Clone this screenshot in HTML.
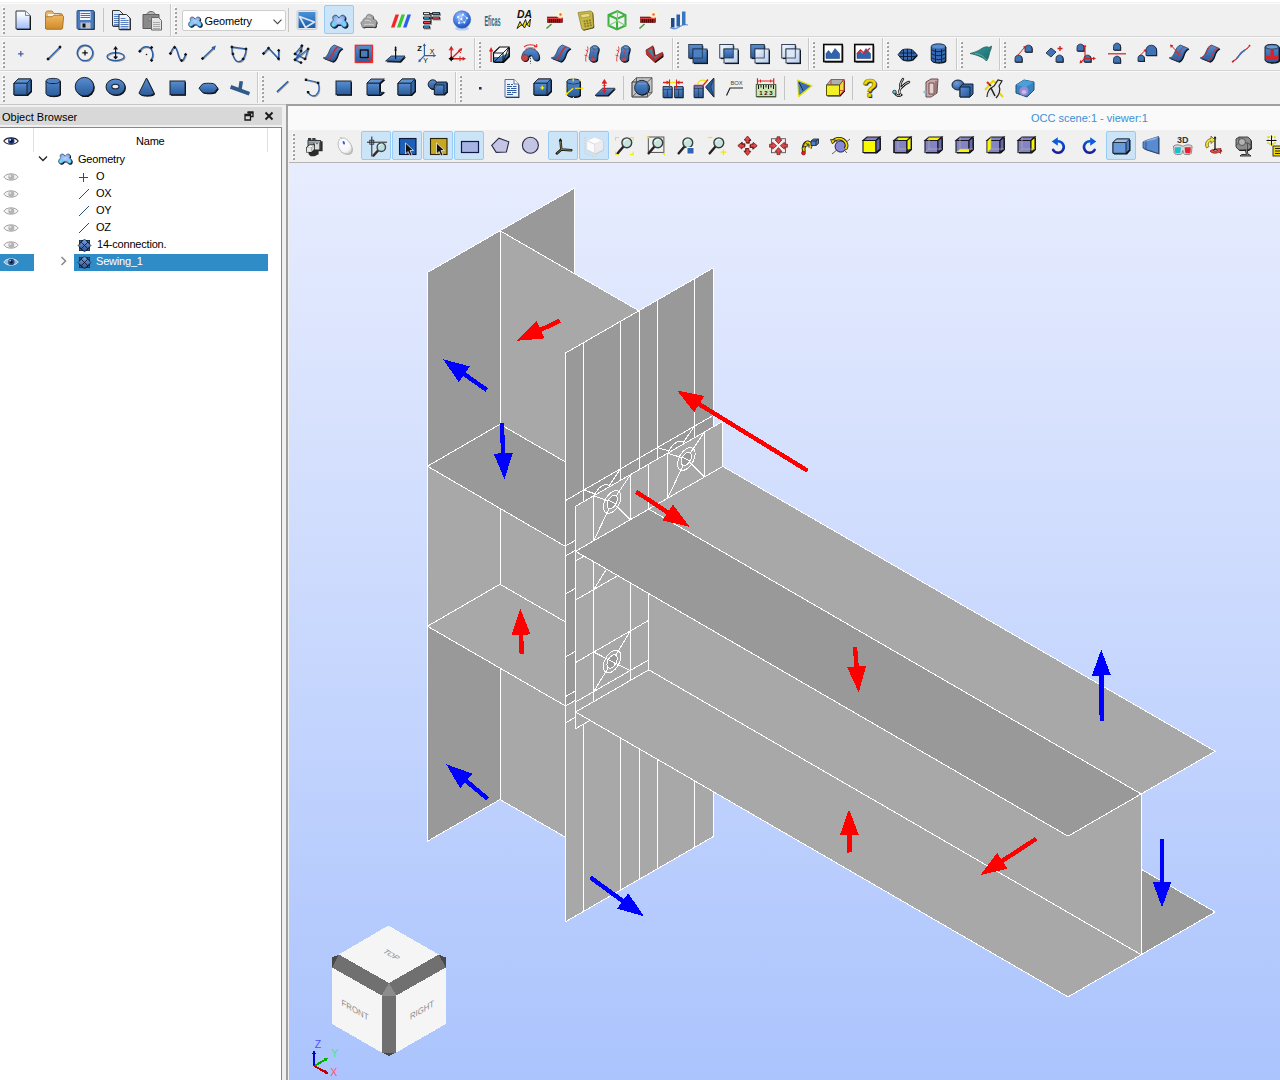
<!DOCTYPE html>
<html><head><meta charset="utf-8"><title>SALOME Geometry</title>
<style>
html,body{margin:0;padding:0}
html{overflow:hidden;width:1280px;height:1080px}
body{width:1280px;height:1080px;overflow:hidden;background:#f0f0f0;position:relative;font-family:"Liberation Sans",sans-serif;font-size:11px;color:#000}
.topw{position:absolute;left:0;top:0;width:1280px;height:2px;background:#fff}
.rowline{position:absolute;left:0;width:1280px;height:1px;background:#d4d4d4}
.ic{position:absolute;overflow:visible}
.grip{position:absolute;width:3px;background:repeating-linear-gradient(#a2a2a2 0 2px,transparent 2px 4px) 1px 1px/2px 100% no-repeat,repeating-linear-gradient(#fff 0 2px,transparent 2px 4px) 0 0/2px 100% no-repeat}
.vsep{position:absolute;width:1px;background:#c8c8c8;box-shadow:1px 0 0 #fbfbfb}
.tsep{position:absolute;width:1px;background:#c4c4c4}
.hl{position:absolute;background:#cce4f7;border:1px solid #99ccf5;box-sizing:border-box;border-radius:2px}
.combo{position:absolute;left:181.5px;top:9.5px;width:104.5px;height:21.5px;box-sizing:border-box;background:#fff;border:1px solid #cdcdcd;border-radius:2px}
.combo span{position:absolute;left:22px;top:4.5px;font-size:11px;letter-spacing:-0.100px}
.dock-title{position:absolute;left:0;top:107px;width:282px;height:18px;background:#d8d8d8}
.dock-title span{position:absolute;left:2px;top:3.5px;font-size:11px}
.tree{position:absolute;left:-1px;top:127px;width:283px;height:960px;background:#fff;border:1px solid #828790;box-sizing:border-box}
.hdrline{position:absolute;width:1px;background:#e0e0e0}
.txt{position:absolute;white-space:nowrap;font-size:11px;line-height:14px;letter-spacing:-0.200px}
.sel{position:absolute;background:#308cc6}
.vline-h{position:absolute;left:287px;top:104px;width:993px;height:2px;background:#a0a0a0}
.vline-v{position:absolute;left:286px;top:104px;width:2px;height:976px;background:#a0a0a0}
.vtitle{position:absolute;left:288px;top:106px;width:992px;height:24px;background:#fafafa}
.vtitle span{position:absolute;left:743px;top:6px;color:#3a8fd4;font-size:11px;white-space:nowrap}
.vtool{position:absolute;left:289px;top:130px;width:991px;height:32px;background:#f0f0f0;border-bottom:1px solid #b4b4b4}
.view3d{position:absolute;left:289px;top:163px}
</style></head>
<body>
<svg width="0" height="0" style="position:absolute"><defs>
<linearGradient id="gPage" x1="0" y1="0" x2="0" y2="1"><stop offset="0" stop-color="#ffffff"/><stop offset=".25" stop-color="#f0f5ff"/><stop offset="1" stop-color="#9cbcf8"/></linearGradient>
<linearGradient id="gFolder" x1="0" y1="0" x2="0" y2="1"><stop offset="0" stop-color="#f0b860"/><stop offset="1" stop-color="#d08a28"/></linearGradient>
<linearGradient id="gBlue" x1="0" y1="0" x2="1" y2="1"><stop offset="0" stop-color="#5b8fd6"/><stop offset="1" stop-color="#2a5596"/></linearGradient>
<linearGradient id="gBlueV" x1="0" y1="0" x2="0" y2="1"><stop offset="0" stop-color="#5a8ed0"/><stop offset=".5" stop-color="#3f74b6"/><stop offset="1" stop-color="#2c5a98"/></linearGradient>
<linearGradient id="gCam" x1="0" y1="0" x2="0" y2="1"><stop offset="0" stop-color="#6a6a70"/><stop offset="1" stop-color="#2a2a30"/></linearGradient>
<linearGradient id="gArrow" gradientUnits="userSpaceOnUse" x1="0" y1="6" x2="0" y2="20"><stop offset="0" stop-color="#0a5cdc"/><stop offset="1" stop-color="#1a1890"/></linearGradient>
<radialGradient id="gMouse" cx=".4" cy=".35" r=".75"><stop offset="0" stop-color="#ffffff"/><stop offset=".7" stop-color="#f4f4f4"/><stop offset="1" stop-color="#c8c8c8"/></radialGradient>
<linearGradient id="gPale" x1="0" y1="0" x2="1" y2="1"><stop offset="0" stop-color="#f4f8fe"/><stop offset="1" stop-color="#b8cce8"/></linearGradient>
<linearGradient id="gTeal" x1="0" y1="0" x2="1" y2="1"><stop offset="0" stop-color="#3a9a98"/><stop offset="1" stop-color="#1a6a6c"/></linearGradient>
<radialGradient id="gBlueR" cx=".38" cy=".32" r=".8"><stop offset="0" stop-color="#6d9ee0"/><stop offset="1" stop-color="#244c8a"/></radialGradient>
<linearGradient id="gShaper" x1="0" y1="0" x2="0" y2="1"><stop offset="0" stop-color="#4a92d8"/><stop offset="1" stop-color="#1f5ca8"/></linearGradient>
<radialGradient id="gGeom" cx=".5" cy=".45" r=".6"><stop offset="0" stop-color="#b4d2ff"/><stop offset=".55" stop-color="#8fb4ec"/><stop offset="1" stop-color="#44689e"/></radialGradient>
<radialGradient id="gGlobe" cx=".4" cy=".3" r=".8"><stop offset="0" stop-color="#9cc4ff"/><stop offset=".6" stop-color="#3a74e0"/><stop offset="1" stop-color="#1a3fa0"/></radialGradient>
<linearGradient id="gShp" x1="0" y1="0" x2="0" y2="1"><stop offset="0" stop-color="#78a8e8"/><stop offset="1" stop-color="#2a4c8c"/></linearGradient></defs></svg>
<div class="topw"></div>
<div class="rowline" style="top:3px;background:#fdfdfd"></div>
<div class="rowline" style="top:36px"></div><div class="rowline" style="top:37px;background:#fafafa"></div>
<div class="rowline" style="top:70px"></div><div class="rowline" style="top:104px;width:287px;background:#c6c6c6"></div><div class="rowline" style="top:71px;background:#fafafa"></div>
<div class="grip" style="left:2px;top:7px;height:27px"></div>
<svg class="ic" style="left:10px;top:8px" width="24" height="24" viewBox="0 0 24 24"><path d="M6 3h9.500l4.500 4.500v13.500h-14z" fill="#111" transform="translate(1,1)"/><path d="M6 3h9.500l4.500 4.500v13.500h-14z" fill="url(#gPage)" stroke="#222" stroke-width=".9"/><path d="M15.500 3v4.500h4.500" fill="#e8f0ff" stroke="#5a6f9a" stroke-width=".8"/></svg>
<svg class="ic" style="left:42px;top:8px" width="24" height="24" viewBox="0 0 24 24"><path d="M3.500 5.500c0-1.500 1-2.500 2.500-2.500h4l2 2.500h6.500c1.200 0 2 .8 2 2v3h-17z" fill="#e8b870" stroke="#a06a18" stroke-width=".8"/><path d="M6 6h11v5h-11z" fill="#fbf3e0"/><path d="M3.500 20.500v-10c0-1 .8-1.800 1.800-1.800h5l1.500-1.500h8c1 0 1.800.8 1.800 1.800l-1 11c0 .8-.8 1.300-1.500 1.300h-14c-.9 0-1.600-.5-1.600-1.300z" fill="url(#gFolder)" stroke="#9a6414" stroke-width=".8"/></svg>
<svg class="ic" style="left:73px;top:8px" width="24" height="24" viewBox="0 0 24 24"><rect x="4" y="2.500" width="17" height="18.500" rx="1" fill="#222" transform="translate(.9,.9)"/><rect x="4" y="2.500" width="17" height="18.500" rx="1" fill="#4a7cc0" stroke="#2a5590"/><rect x="7" y="3.500" width="10.500" height="8.500" fill="#f4f8ff"/><path d="M7.500 5.500h9.500M7.500 7.500h9.500M7.500 9.500h9.500" stroke="#3f73c0" stroke-width="1"/><rect x="7.500" y="14.500" width="10" height="6" fill="#c0c4c8"/><rect x="9.500" y="15.500" width="3" height="4" fill="#111"/></svg>
<div class="tsep" style="left:103px;top:8px;height:24px"></div>
<svg class="ic" style="left:109px;top:8px" width="24" height="24" viewBox="0 0 24 24"><path d="M3.500 2.500h7l3.500 3.500v12h-10.500z" fill="#111" transform="translate(.8,.8)"/><path d="M3.500 2.500h7l3.500 3.500v12h-10.500z" fill="#dfe9fb" stroke="#222" stroke-width=".9"/><path d="M5 6.500h6M5 8.500h7.500M5 10.500h7.500M5 12.500h7.500M5 14.500h7.500M5 16.500h7.500" stroke="#3565b8" stroke-width=".8"/><path d="M10 6.500h7.500l3.500 3.500v11.500h-11z" fill="#111" transform="translate(.8,.8)"/><path d="M10 6.500h7.500l3.500 3.500v11.500h-11z" fill="#eef3fd" stroke="#222" stroke-width=".9"/><path d="M11.500 10.500h5M11.500 12.500h8M11.500 14.500h8M11.500 16.500h8M11.500 18.500h8M11.500 20.200h8" stroke="#3565b8" stroke-width=".8"/></svg>
<svg class="ic" style="left:140px;top:8px" width="24" height="24" viewBox="0 0 24 24"><path d="M3 6.500h16v14h-16z" fill="#8a8a8a" stroke="#5a5a5a"/><path d="M7 6.500c0-4 8-4 8 0z" fill="#b8b8b8" stroke="#666"/><path d="M8 12c2-4 6-4 8-1l2-1-1 5-5-1.500 2-1c-1.500-2-4-1.500-5 1z" fill="#aaa" stroke="#666" stroke-width=".6"/><path d="M11.500 9.500h7l3 3v9.500h-10z" fill="#e4e4e4" stroke="#666"/><path d="M13 14.500h7M13 16.500h7M13 18.500h7M13 20.500h7" stroke="#999" stroke-width=".8"/></svg>
<div class="vsep" style="left:170px;top:4px;height:32px"></div>
<div class="grip" style="left:174px;top:7px;height:27px"></div>
<div class="combo"><svg width="16" height="16" viewBox="0 0 20 20" style="position:absolute;left:4px;top:3px"><g transform="translate(-2.800,-3.500)"><g transform="translate(.8,0)"><path d="M6.500 8C8 6.500 10.500 7 11.300 8.800L12.200 10L13.100 8.800C14 7 16.500 6.500 18 8C19 9.200 18.700 11 17.600 12.200C20 13.200 21.300 16 20.200 18C19.200 20 16.200 20 14.800 18.200L13.800 16.800H10.600L9.600 18.200C8.200 20 5.200 20 4.200 18C3.100 16 4.400 13.200 6.800 12.200C5.700 11 5.400 9.200 6.500 8Z" fill="#0c1420" transform="translate(1.100,1.100)"/><path d="M6.500 8C8 6.500 10.500 7 11.300 8.800L12.200 10L13.100 8.800C14 7 16.500 6.500 18 8C19 9.200 18.700 11 17.600 12.200C20 13.200 21.300 16 20.200 18C19.200 20 16.200 20 14.800 18.200L13.800 16.800H10.600L9.600 18.200C8.200 20 5.200 20 4.200 18C3.100 16 4.400 13.200 6.800 12.200C5.700 11 5.400 9.200 6.500 8Z" fill="url(#gGeom)" stroke="#22385a" stroke-width=".6"/><ellipse cx="7" cy="16.300" rx="1.900" ry="2.500" fill="#68dcf4" transform="rotate(35 7 16.300)"/><ellipse cx="17.400" cy="16.300" rx="1.900" ry="2.500" fill="#68dcf4" transform="rotate(-35 17.400 16.300)"/></g></g></svg><span>Geometry</span><svg width="9" height="6" viewBox="0 0 9 6" style="position:absolute;left:90.500px;top:8px"><path d="M.5.7l4 4 4-4" fill="none" stroke="#444" stroke-width="1.100"/></svg></div>
<div class="tsep" style="left:288px;top:8px;height:24px"></div>
<div class="hl" style="left:324px;top:5px;width:30px;height:29px"></div>
<svg class="ic" style="left:295px;top:8px" width="24" height="24" viewBox="0 0 24 24"><rect x="2" y="2.500" width="20" height="19" rx="1.500" fill="#e4e8ee" stroke="#c8ccd2"/><rect x="3.500" y="4" width="17" height="16" fill="url(#gShaper)"/><path d="M4.500 8.500l15 5.500-9 5.500z" fill="none" stroke="#d8e6f6" stroke-width="1.700" stroke-linejoin="round"/></svg>
<svg class="ic" style="left:326px;top:8px" width="24" height="24" viewBox="0 0 24 24"><g transform="translate(.8,0)"><path d="M6.500 8C8 6.500 10.500 7 11.300 8.800L12.200 10L13.100 8.800C14 7 16.500 6.500 18 8C19 9.200 18.700 11 17.600 12.200C20 13.200 21.300 16 20.200 18C19.200 20 16.200 20 14.800 18.200L13.800 16.800H10.600L9.600 18.200C8.200 20 5.200 20 4.200 18C3.100 16 4.400 13.200 6.800 12.200C5.700 11 5.400 9.200 6.500 8Z" fill="#0c1420" transform="translate(1.100,1.100)"/><path d="M6.500 8C8 6.500 10.500 7 11.300 8.800L12.200 10L13.100 8.800C14 7 16.500 6.500 18 8C19 9.200 18.700 11 17.600 12.200C20 13.200 21.300 16 20.200 18C19.200 20 16.200 20 14.800 18.200L13.800 16.800H10.600L9.600 18.200C8.200 20 5.200 20 4.200 18C3.100 16 4.400 13.200 6.800 12.200C5.700 11 5.400 9.200 6.500 8Z" fill="url(#gGeom)" stroke="#22385a" stroke-width=".6"/><ellipse cx="7" cy="16.300" rx="1.900" ry="2.500" fill="#68dcf4" transform="rotate(35 7 16.300)"/><ellipse cx="17.400" cy="16.300" rx="1.900" ry="2.500" fill="#68dcf4" transform="rotate(-35 17.400 16.300)"/></g></svg>
<svg class="ic" style="left:357px;top:8px" width="24" height="24" viewBox="0 0 24 24"><path d="M5 17c-2-1-1-4 1-4c0-2 1-3 3-3c0-3 3-5 5-3c2 0 3 2 2 4c3 0 5 3 3 5c1 2-1 4-3 3h-8c-2 1-4 0-3-2z" fill="#222" transform="translate(.8,1)"/><path d="M5 17c-2-1-1-4 1-4c0-2 1-3 3-3c0-3 3-5 5-3c2 0 3 2 2 4c3 0 5 3 3 5c1 2-1 4-3 3h-8c-2 1-4 0-3-2z" fill="#a4a4a4" stroke="#707070" stroke-width=".7"/><path d="M8 13c2-1 4-1 6 1M10 9c1 0 3 0 4 1M7 17c3-1 7-1 10 0" stroke="#d8d8d8" fill="none" stroke-width=".9"/></svg>
<svg class="ic" style="left:388px;top:8px" width="24" height="24" viewBox="0 0 24 24"><path d="M3 19.500l4.500-13h3.500l-4.500 13z" fill="#f02828"/><path d="M9 19.500l4.500-13h3.500l-4.500 13z" fill="#38c838"/><path d="M15 19.500l4.500-13h3.500l-4.500 13z" fill="#2860f0"/></svg>
<svg class="ic" style="left:419px;top:8px" width="24" height="24" viewBox="0 0 24 24"><g transform="translate(1,1)" opacity=".35"><rect x="4" y="4" width="7" height="3"/><rect x="13" y="4" width="8" height="3"/><rect x="4" y="8.500" width="7" height="3"/><rect x="13" y="8.500" width="8" height="3"/><rect x="4" y="13" width="8" height="3"/><rect x="4" y="17.500" width="7" height="3"/></g><rect x="4" y="4" width="7" height="3" rx=".8" fill="#222"/><rect x="5" y="4.800" width="5" height="1.400" fill="#e8e8e8"/><rect x="13" y="4" width="8" height="3" rx=".8" fill="#222"/><rect x="14" y="4.800" width="6" height="1.400" fill="#30a0f0"/><rect x="4" y="8.500" width="7" height="3" rx=".8" fill="#222"/><rect x="5" y="9.300" width="5" height="1.400" fill="#30a0f0"/><rect x="13" y="8.500" width="8" height="3" rx=".8" fill="#222"/><rect x="14" y="9.300" width="6" height="1.400" fill="#f04050"/><rect x="4" y="13" width="8" height="3" rx=".8" fill="#222"/><rect x="5" y="13.800" width="6" height="1.400" fill="#f04050"/><rect x="4" y="17.500" width="7" height="3" rx=".8" fill="#222"/><rect x="5" y="18.300" width="5" height="1.400" fill="#30a0f0"/><path d="M11 5.500h2M12 5.500v9M11 10h2" stroke="#222" stroke-width="1.200" fill="none"/></svg>
<svg class="ic" style="left:450px;top:8px" width="24" height="24" viewBox="0 0 24 24"><ellipse cx="12" cy="20.500" rx="7" ry="2" fill="#9cc0f0" opacity=".7"/><circle cx="12" cy="11.500" r="8.700" fill="url(#gGlobe)" stroke="#3a68c8" stroke-width=".6"/><path d="M8 9l5-2.500 4 3.500-2.500 4.500-5 .5zM8 9l6.500 5.500M13 6.500l-4.500 8.500" fill="none" stroke="#e8f0ff" stroke-width=".6" opacity=".9"/><circle cx="8" cy="9" r=".9" fill="#fff"/><circle cx="13" cy="6.500" r=".9" fill="#fff"/><circle cx="17" cy="10" r=".9" fill="#fff"/><circle cx="14.500" cy="14.500" r=".9" fill="#fff"/><circle cx="9" cy="15" r=".9" fill="#fff"/><circle cx="11.500" cy="11" r=".9" fill="#fff"/></svg>
<svg class="ic" style="left:480px;top:8px" width="24" height="24" viewBox="0 0 24 24"><text x="12.500" y="17.800" font-family="Liberation Sans, sans-serif" font-size="14.500" font-weight="bold" fill="#1f6f8f" text-anchor="middle" textLength="16" lengthAdjust="spacingAndGlyphs">Eficas</text></svg>
<svg class="ic" style="left:512px;top:8px" width="24" height="24" viewBox="0 0 24 24"><text x="12.500" y="9.500" font-family="Liberation Sans, sans-serif" font-size="10" font-style="italic" font-weight="bold" fill="#111" text-anchor="middle" textLength="15" lengthAdjust="spacingAndGlyphs">DA</text><path d="M5 20.500l3-7 2.500 4.500 3-6.500 1.500 5 3.500-5.500-1 8-3-3-2 4-2.500-3.500z" fill="#f8e000" stroke="#111" stroke-width=".9" stroke-linejoin="round"/></svg>
<svg class="ic" style="left:543px;top:8px" width="24" height="24" viewBox="0 0 24 24"><path d="M3.500 20.500l5-4.500" stroke="#4a9a3a" stroke-width="1.600"/><rect x="4.500" y="9" width="15" height="5.500" fill="#a01818" stroke="#600808" stroke-width=".6"/><path d="M4.500 10.500h15" stroke="#e84040" stroke-width="1.200"/><path d="M6.500 11v3.500M8.500 11v3.500M10.500 11v3.500M12.500 11v3.500M14.500 11v3.500M16.500 11v3.500" stroke="#400" stroke-width=".8"/><circle cx="17.500" cy="6.500" r="3.800" fill="#fff8c0" opacity=".85"/><circle cx="17.500" cy="6.500" r="1.300" fill="#f06060"/></svg>
<svg class="ic" style="left:574px;top:8px" width="24" height="24" viewBox="0 0 24 24"><path d="M4 4.500l12-1.500c1.500 0 2.500 1 2.500 2l1 13c0 1-.5 1.500-1.500 1.800l-8 2c-1 .2-2-.3-2.300-1.300z" fill="#3a3410" transform="translate(.8,.8)"/><path d="M4 4.500l12-1.500c1.500 0 2.500 1 2.500 2l1 13c0 1-.5 1.500-1.500 1.800l-8 2c-1 .2-2-.3-2.300-1.300z" fill="#c8b848" stroke="#8a7c20" stroke-width=".7"/><path d="M6.500 6.500l9-1.200.5 3.200-8.500 1.500z" fill="#e8dc88" stroke="#8a7c20" stroke-width=".5"/><path d="M9.500 13.500l7.500-1.500M10 16l7.500-1.500M10.500 18.500l7.500-1.500" stroke="#8a7c20" stroke-width="1.700" stroke-dasharray="1.800 1"/></svg>
<svg class="ic" style="left:605px;top:8px" width="24" height="24" viewBox="0 0 24 24"><path d="M3.500 7l9-4 8 4v10.500l-8.500 4-8.500-4z" fill="none" stroke="#40b040" stroke-width="2"/><path d="M3.500 7l8.500 4 8.500-4M12 11v10.500" fill="none" stroke="#40b040" stroke-width="2"/><path d="M12.500 3v10l-9 4.500M12.500 13l8 4.500" fill="none" stroke="#78d078" stroke-width="1.100"/></svg>
<svg class="ic" style="left:636px;top:8px" width="24" height="24" viewBox="0 0 24 24"><path d="M3.500 20.500l5-4.500" stroke="#4a9a3a" stroke-width="1.600"/><rect x="4.500" y="9" width="15" height="5.500" fill="#a01818" stroke="#600808" stroke-width=".6"/><path d="M4.500 10.500h15" stroke="#e84040" stroke-width="1.200"/><path d="M6.500 11v3.500M8.500 11v3.500M10.500 11v3.500M12.500 11v3.500M14.500 11v3.500M16.500 11v3.500" stroke="#400" stroke-width=".8"/><circle cx="17.500" cy="6.500" r="3.800" fill="#fff8c0" opacity=".85"/><circle cx="17.500" cy="6.500" r="1.300" fill="#f06060"/></svg>
<svg class="ic" style="left:667px;top:8px" width="24" height="24" viewBox="0 0 24 24"><path d="M3 19.500c3 2 6 1.500 9-.5s6-3 9-2" stroke="#6a9ad8" stroke-width="1.300" fill="none"/><path d="M4 10h3.500v9.500h-3.500z" fill="#1f4a8a"/><path d="M9.500 6.500h3.500v12h-3.500z" fill="#2a60a8"/><path d="M15 3.500h3.500v13.500h-3.500z" fill="#3a78c0"/></svg>
<div class="grip" style="left:2px;top:41px;height:27px"></div>
<svg class="ic" style="left:10px;top:42px" width="24" height="24" viewBox="0 0 24 24"><path d="M10.800 9v5.600M8 11.800h5.600" stroke="#4a5ea8" stroke-width="1.300"/></svg>
<svg class="ic" style="left:42px;top:42px" width="24" height="24" viewBox="0 0 24 24"><path d="M6 17L18 5" fill="none" stroke="#333" stroke-width="1.3" opacity=".45" transform="translate(.7,.8)"/><path d="M6 17L18 5" fill="none" stroke="#2c5fa6" stroke-width="1.3"/><path d="M6 15.3l1.7 1.7-1.7 1.7-1.7-1.7z" fill="#111"/><path d="M18 3.3l1.7 1.7-1.7 1.7-1.7-1.7z" fill="#111"/></svg>
<svg class="ic" style="left:73px;top:42px" width="24" height="24" viewBox="0 0 24 24"><path d="M12 3.200a7.700 7.700 0 1 0 .01 0z" fill="none" stroke="#333" stroke-width="1.4" opacity=".45" transform="translate(.7,.8)"/><path d="M12 3.200a7.700 7.700 0 1 0 .01 0z" fill="none" stroke="#2c5fa6" stroke-width="1.4"/><path d="M12 8.200v5.400M9.300 10.900h5.400" stroke="#111" stroke-width="1.300"/></svg>
<svg class="ic" style="left:104px;top:42px" width="24" height="24" viewBox="0 0 24 24"><path d="M3 14.600a8.600 4 0 1 0 17.200 0a8.600 4 0 1 0-17.200 0z" fill="none" stroke="#333" stroke-width="1.3" opacity=".45" transform="translate(.7,.8)"/><path d="M3 14.600a8.600 4 0 1 0 17.200 0a8.600 4 0 1 0-17.200 0z" fill="none" stroke="#2c5fa6" stroke-width="1.3"/><path d="M11.600 5.500v10.500M9.800 7.500l1.800-2.500 1.800 2.500M9.800 14.500l1.800 2 1.800-2" stroke="#111" stroke-width="1.200" fill="none"/></svg>
<svg class="ic" style="left:135px;top:42px" width="24" height="24" viewBox="0 0 24 24"><path d="M4.800 9.200c3-6 10-5.500 12-1c1.500 3.500 1 7.500-1.200 10.200" fill="none" stroke="#333" stroke-width="1.4" opacity=".45" transform="translate(.7,.8)"/><path d="M4.800 9.200c3-6 10-5.500 12-1c1.500 3.500 1 7.500-1.200 10.200" fill="none" stroke="#2c5fa6" stroke-width="1.4"/><path d="M4.8 7.499999999999999l1.7 1.7-1.7 1.7-1.7-1.7z" fill="#111"/><path d="M16.6 3.8l1.7 1.7-1.7 1.7-1.7-1.7z" fill="#111"/><path d="M16.6 16.7l1.7 1.7-1.7 1.7-1.7-1.7z" fill="#111"/><circle cx="11.500" cy="12.500" r=".8" fill="#111"/></svg>
<svg class="ic" style="left:166px;top:42px" width="24" height="24" viewBox="0 0 24 24"><path d="M4.400 11.500c1.500-4 2.800-6.300 4.200-6.300c1.800 0 2.600 4 3.500 7c.9 3 2 6.400 3.400 6.400c1.600 0 3-3 4.100-6.200" fill="none" stroke="#333" stroke-width="1.4" opacity=".45" transform="translate(.7,.8)"/><path d="M4.400 11.500c1.500-4 2.800-6.300 4.200-6.300c1.800 0 2.600 4 3.500 7c.9 3 2 6.400 3.400 6.400c1.600 0 3-3 4.100-6.200" fill="none" stroke="#2c5fa6" stroke-width="1.4"/><path d="M4.4 9.8l1.7 1.7-1.7 1.7-1.7-1.7z" fill="#111"/><path d="M8.6 3.5l1.7 1.7-1.7 1.7-1.7-1.7z" fill="#111"/><path d="M15.5 16.900000000000002l1.7 1.7-1.7 1.7-1.7-1.7z" fill="#111"/><path d="M19.6 10.700000000000001l1.7 1.7-1.7 1.7-1.7-1.7z" fill="#111"/></svg>
<svg class="ic" style="left:197px;top:42px" width="24" height="24" viewBox="0 0 24 24"><path d="M5.500 16.500L17 5.500" fill="none" stroke="#333" stroke-width="1.3" opacity=".45" transform="translate(.7,.8)"/><path d="M5.500 16.500L17 5.500" fill="none" stroke="#2c5fa6" stroke-width="1.3"/><path d="M19 3.600l-4.600 1.600 3 3z" fill="#2c5fa6"/><path d="M5.5 14.8l1.7 1.7-1.7 1.7-1.7-1.7z" fill="#111"/></svg>
<svg class="ic" style="left:227px;top:42px" width="24" height="24" viewBox="0 0 24 24"><path d="M4.900 5L19 6.900M4.900 5c-.5 5 2 14.600 6.800 14.600c4.500 0 7.300-7 7.300-12.700" fill="none" stroke="#333" stroke-width="1.3" opacity=".45" transform="translate(.7,.8)"/><path d="M4.900 5L19 6.900M4.900 5c-.5 5 2 14.600 6.800 14.600c4.500 0 7.300-7 7.300-12.700" fill="none" stroke="#2c5fa6" stroke-width="1.3"/><path d="M4.9 3.3l1.7 1.7-1.7 1.7-1.7-1.7z" fill="#111"/><path d="M19 5.2l1.7 1.7-1.7 1.7-1.7-1.7z" fill="#111"/><path d="M5.9 10.200000000000001l1.7 1.7-1.7 1.7-1.7-1.7z" fill="#111"/><path d="M16.1 15.2l1.7 1.7-1.7 1.7-1.7-1.7z" fill="#111"/></svg>
<svg class="ic" style="left:259px;top:42px" width="24" height="24" viewBox="0 0 24 24"><path d="M4.500 11.500l5-5.400 10 10.600.25-8.300" fill="none" stroke="#333" stroke-width="1.4" opacity=".45" transform="translate(.7,.8)"/><path d="M4.500 11.500l5-5.400 10 10.600.25-8.300" fill="none" stroke="#2c5fa6" stroke-width="1.4"/><path d="M4.5 9.8l1.7 1.7-1.7 1.7-1.7-1.7z" fill="#111"/><path d="M9.5 4.3999999999999995l1.7 1.7-1.7 1.7-1.7-1.7z" fill="#111"/><path d="M19.5 15.0l1.7 1.7-1.7 1.7-1.7-1.7z" fill="#111"/><path d="M19.7 6.7l1.7 1.7-1.7 1.7-1.7-1.7z" fill="#111"/></svg>
<svg class="ic" style="left:289px;top:42px" width="24" height="24" viewBox="0 0 24 24"><path d="M12.900 3.700L6 11.900l10 5M19.100 6.900L6 17.700l6 2.900M12.900 3.700l-1 5.300M19.100 6.900l-3 10M12 9l-6 8.700" fill="none" stroke="#333" stroke-width="1.2" opacity=".45" transform="translate(.7,.8)"/><path d="M12.900 3.700L6 11.900l10 5M19.100 6.900L6 17.700l6 2.900M12.900 3.700l-1 5.300M19.100 6.900l-3 10M12 9l-6 8.700" fill="none" stroke="#2c5fa6" stroke-width="1.2"/><path d="M12.9 2.0l1.7 1.7-1.7 1.7-1.7-1.7z" fill="#111"/><path d="M19.1 5.2l1.7 1.7-1.7 1.7-1.7-1.7z" fill="#111"/><path d="M6 10.200000000000001l1.7 1.7-1.7 1.7-1.7-1.7z" fill="#111"/><path d="M12 7.3l1.7 1.7-1.7 1.7-1.7-1.7z" fill="#111"/><path d="M16 15.2l1.7 1.7-1.7 1.7-1.7-1.7z" fill="#111"/><path d="M6 16.0l1.7 1.7-1.7 1.7-1.7-1.7z" fill="#111"/><path d="M12 18.900000000000002l1.7 1.7-1.7 1.7-1.7-1.7z" fill="#111"/></svg>
<svg class="ic" style="left:321px;top:42px" width="24" height="24" viewBox="0 0 24 24"><path d="M2.100 15.900c3.500-.5 4.500-3 6-6.500c1.200-3 2.500-5.500 5.300-6.400l8.100 3.500c-2.800 1-4 3.500-5 6.500c-1.200 3.500-2.500 5.800-5 6.600z" fill="#0a0a0a" transform="translate(1,1.100)"/><path d="M2.100 15.900c3.500-.5 4.500-3 6-6.500c1.200-3 2.500-5.500 5.300-6.400l8.100 3.500c-2.800 1-4 3.500-5 6.500c-1.200 3.500-2.500 5.800-5 6.600z" fill="url(#gBlueV)" stroke="#1d3557" stroke-width=".7"/><path d="M6.500 17.800c3.200-.8 4.300-3.500 5.600-6.800c1.200-3 2.300-5.300 5.300-6.300" fill="none" stroke="#d03030" stroke-width="1.600"/></svg>
<svg class="ic" style="left:352px;top:42px" width="24" height="24" viewBox="0 0 24 24"><rect x="3.300" y="3.300" width="17.200" height="17.200" fill="url(#gBlueV)" stroke="#f02828" stroke-width="1.300"/><path d="M3.500 3.500l5 5M20.500 3.500l-5 5M3.500 20.500l5-5M20.500 20.500l-5-5" stroke="#f04040" stroke-width="1" stroke-dasharray="1.600 1"/><rect x="8.300" y="8" width="7.800" height="7.500" fill="#4a7cba" stroke="#0a0a0a" stroke-width="1.300"/></svg>
<svg class="ic" style="left:383px;top:42px" width="24" height="24" viewBox="0 0 24 24"><path d="M2.600 19l5.650-5h13.750l-5 5.600z" fill="#0a0a0a" transform="translate(1,1.200)"/><path d="M2.600 19l5.650-5h13.750l-5 5.600z" fill="url(#gBlueV)" stroke="#16202e" stroke-width=".8"/><path d="M12.600 17V5.200M11.300 8h2.600" stroke="#111" stroke-width="1.200"/><path d="M12.600 4l-1.200 2.200h2.400z" fill="#111"/></svg>
<svg class="ic" style="left:414px;top:42px" width="24" height="24" viewBox="0 0 24 24"><path d="M10.400 2.500v11.100h10.500M10.400 13.600l-5.200 5.600" stroke="#2c5fa6" stroke-width="1.200" fill="none"/><path d="M10.400 1.200l-1.600 2.800h3.200zM22.200 13.600l-2.800-1.600v3.200zM4.300 20.300l.7-3.200 2.200 2.100z" fill="#2c5fa6"/><text x="3.200" y="8.600" font-family="Liberation Sans, sans-serif" font-size="7.500" font-weight="bold" fill="#111">Z</text><text x="15.800" y="12" font-family="Liberation Sans, sans-serif" font-size="7" fill="#111">X</text><text x="9.300" y="21" font-family="Liberation Sans, sans-serif" font-size="7" fill="#111">Y</text></svg>
<svg class="ic" style="left:445px;top:42px" width="24" height="24" viewBox="0 0 24 24"><path d="M6.250 16.750V6M6.250 16.750h12.500M6.250 16.750L15.600 7.800" stroke="#d02020" stroke-width="1.300"/><path d="M6.250 3.800l-2 3.400h4zM21 16.750l-3.400-2v4zM17.300 6l-3.600 1 2.600 2.600z" fill="#d02020"/><path d="M3.800 7.800h4.900M15 14.300v4.900M13.200 8.200l2.800 2.800" stroke="#d02020" stroke-width="1"/><path d="M6.250 13.800l.9 2.050 2.050.9-2.050.9-.9 2.050-.9-2.050-2.050-.9 2.050-.9z" fill="#0a0a0a"/><circle cx="6.250" cy="16.750" r="1.700" fill="#0a0a0a"/></svg>
<div class="vsep" style="left:474px;top:38px;height:32px"></div>
<div class="grip" style="left:478px;top:41px;height:27px"></div>
<svg class="ic" style="left:487px;top:42px" width="24" height="24" viewBox="0 0 24 24"><path d="M4.100 20V7.500M2.600 9.500l1.500-3 1.500 3" stroke="#e02020" stroke-width="1.300" fill="none"/><path d="M6.500 11l6-6h9.500v9l-6 6h-9.500z" fill="#0a0a0a" transform="translate(.9,1)"/><path d="M6.500 11l6-6h9.500v9l-6 6h-9.500z" fill="#f4f6fa"/><path d="M6.500 20h9.500l6-6v-3l-9.500 4h-6z" fill="#3f74b4"/><path d="M6.500 11h9.500v9M16 11l6-6M7 20l9-9M16 20l6-15" stroke="#0a0a0a" stroke-width=".9" fill="none"/><path d="M6.500 11l6-6h9.500v9l-6 6h-9.500z" fill="none" stroke="#0a0a0a" stroke-width="1.200"/></svg>
<svg class="ic" style="left:518px;top:42px" width="24" height="24" viewBox="0 0 24 24"><path d="M3.800 16c0-6 4-9.500 8.700-9.500s8.500 3.500 8.700 8.500c0 2.500-1.500 3.500-3.200 3.500c-2 0-3-1.500-3.200-3c-.3-1.500-1-2.300-2.300-2.300s-2 1-2.300 2.500c-.3 1.800-1.500 3.300-3.500 3.300c-1.800 0-2.900-1.200-2.900-3z" fill="#0a0a0a" transform="translate(1,1.100)"/><path d="M3.800 16c0-6 4-9.500 8.700-9.500s8.500 3.500 8.700 8.500c0 2.500-1.500 3.500-3.200 3.500c-2 0-3-1.500-3.200-3c-.3-1.500-1-2.300-2.300-2.300s-2 1-2.300 2.500c-.3 1.800-1.500 3.300-3.500 3.300c-1.800 0-2.900-1.200-2.900-3z" fill="url(#gBlueV)" stroke="#1d3557" stroke-width=".7"/><circle cx="6.900" cy="15.800" r="3.300" fill="#c04848" stroke="#802020" stroke-width=".5"/><path d="M6 5c3.500-3 9.500-3 13 0M19 5l-3-.3M19 5l-.5-2.800" fill="none" stroke="#e03030" stroke-width="1.100"/><path d="M7.500 7c3-2 7-2 10 0" fill="none" stroke="#e03030" stroke-width=".8" opacity=".8"/><path d="M12.500 13v9" stroke="#333" stroke-width=".9" stroke-dasharray="1.400 1.400"/></svg>
<svg class="ic" style="left:549px;top:42px" width="24" height="24" viewBox="0 0 24 24"><path d="M2.100 15.900c3.500-.5 4.500-3 6-6.500c1.200-3 2.500-5.500 5.300-6.400l8.100 3.500c-2.800 1-4 3.500-5 6.500c-1.200 3.500-2.500 5.800-5 6.600z" fill="#0a0a0a" transform="translate(1,1.100)"/><path d="M2.100 15.900c3.500-.5 4.500-3 6-6.500c1.200-3 2.500-5.500 5.300-6.400l8.100 3.500c-2.800 1-4 3.500-5 6.500c-1.200 3.500-2.500 5.800-5 6.600z" fill="url(#gBlueV)" stroke="#1d3557" stroke-width=".7"/><path d="M6.500 17.800c3.200-.8 4.300-3.500 5.600-6.800c1.200-3 2.300-5.300 5.300-6.300" fill="none" stroke="#d03030" stroke-width="1.600"/></svg>
<svg class="ic" style="left:580px;top:42px" width="24" height="24" viewBox="0 0 24 24"><path d="M12 4.500c2-1.500 5.500-1 6.500 1c.8 2-.5 4-1 6.500c-.5 2.500 0 4-.5 5.500c-1 2.500-5 3-7 1c-1.300-1.300-1-3.500-.5-5.500c.6-2.500 1.200-4.500.8-6c-.3-1 .7-2 1.700-2.500z" fill="#0a0a0a" transform="translate(1,1.100)"/><path d="M12 4.500c2-1.500 5.500-1 6.500 1c.8 2-.5 4-1 6.500c-.5 2.500 0 4-.5 5.500c-1 2.500-5 3-7 1c-1.300-1.300-1-3.500-.5-5.500c.6-2.500 1.200-4.500.8-6c-.3-1 .7-2 1.700-2.500z" fill="url(#gBlueV)" stroke="#1d3557" stroke-width=".7"/><ellipse cx="15" cy="5.500" rx="3" ry="1.600" fill="#6a96d0" stroke="#1d3557" stroke-width=".5" transform="rotate(10 15 5.500)"/><ellipse cx="13" cy="17.500" rx="2.600" ry="1.600" fill="#c04848"/><path d="M14.500 7c-1 3-2 6-1.500 9" fill="none" stroke="#d03030" stroke-width="1" stroke-dasharray="2 1"/><path d="M7.500 4.500c1 3 0 5-1 8s-1 5-.5 7M5.500 8l2.500 1.500M4.500 13l3 1" fill="none" stroke="#e03030" stroke-width=".9"/></svg>
<svg class="ic" style="left:611px;top:42px" width="24" height="24" viewBox="0 0 24 24"><path d="M12 4.500c2-1.500 5.500-1 6.500 1c.8 2-.5 4-1 6.500c-.5 2.500 0 4-.5 5.500c-1 2.500-5 3-7 1c-1.300-1.300-1-3.500-.5-5.500c.6-2.500 1.200-4.500.8-6c-.3-1 .7-2 1.700-2.500z" fill="#0a0a0a" transform="translate(1,1.100)"/><path d="M12 4.500c2-1.500 5.500-1 6.500 1c.8 2-.5 4-1 6.500c-.5 2.500 0 4-.5 5.500c-1 2.500-5 3-7 1c-1.300-1.300-1-3.500-.5-5.500c.6-2.500 1.200-4.500.8-6c-.3-1 .7-2 1.700-2.500z" fill="url(#gBlueV)" stroke="#1d3557" stroke-width=".7"/><ellipse cx="15" cy="5.500" rx="3" ry="1.600" fill="#6a96d0" stroke="#1d3557" stroke-width=".5" transform="rotate(10 15 5.500)"/><ellipse cx="13" cy="17.500" rx="2.600" ry="1.600" fill="#c04848"/><path d="M14.500 7c-1 3-2 6-1.500 9" fill="none" stroke="#d03030" stroke-width="1" stroke-dasharray="2 1"/><path d="M7.500 4.500c1 3 0 5-1 8s-1 5-.5 7M5.500 8l2.500 1.500M4.500 13l3 1" fill="none" stroke="#e03030" stroke-width=".9"/></svg>
<svg class="ic" style="left:642px;top:42px" width="24" height="24" viewBox="0 0 24 24"><path d="M4 8l7-4.200 1.800 10.200 7.700-3.700 0 3.500-8 6.200-8-7.500z" fill="#0a0a0a" transform="translate(1,1.100)"/><path d="M4 8l7-4.200 1.800 10.200 7.700-3.700 0 3.500-8 6.200-8-7.500z" fill="#c03030" stroke="#801818" stroke-width=".7"/><path d="M6 8.500l4-2.500 1.500 9.500 7.500-3.500-6.500 5z" fill="#3a88a8"/><path d="M11.500 15.500l1 2" stroke="#801818" stroke-width=".6"/></svg>
<div class="vsep" style="left:672px;top:38px;height:32px"></div>
<div class="grip" style="left:676px;top:41px;height:27px"></div>
<svg class="ic" style="left:685px;top:42px" width="24" height="24" viewBox="0 0 24 24"><rect x="3.750" y="2.500" width="13.500" height="13.500" fill="#0a0a0a" transform="translate(1,1.100)"/><rect x="8" y="7" width="14" height="14" fill="#0a0a0a" transform="translate(1,1.100)"/><rect x="3.750" y="2.500" width="13.500" height="13.500" fill="url(#gBlueV)" stroke="#22324a" stroke-width=".9"/><rect x="8" y="7" width="14" height="14" fill="url(#gBlueV)" stroke="#22324a" stroke-width=".9"/><rect x="8" y="7" width="9.250" height="9" fill="#4a80c4" stroke="#22324a" stroke-width=".8"/></svg>
<svg class="ic" style="left:716px;top:42px" width="24" height="24" viewBox="0 0 24 24"><rect x="3.750" y="2.500" width="13.500" height="13.500" fill="#0a0a0a" transform="translate(1,1.100)"/><rect x="8" y="7" width="14" height="14" fill="#0a0a0a" transform="translate(1,1.100)"/><rect x="3.750" y="2.500" width="13.500" height="13.500" fill="url(#gPale)" stroke="#22324a" stroke-width=".9"/><rect x="8" y="7" width="14" height="14" fill="url(#gPale)" stroke="#22324a" stroke-width=".9"/><rect x="8" y="7" width="9.250" height="9" fill="url(#gBlueV)" stroke="#22324a" stroke-width=".8"/></svg>
<svg class="ic" style="left:747px;top:42px" width="24" height="24" viewBox="0 0 24 24"><rect x="3.750" y="2.500" width="13.500" height="13.500" fill="#0a0a0a" transform="translate(1,1.100)"/><rect x="8" y="7" width="14" height="14" fill="#0a0a0a" transform="translate(1,1.100)"/><rect x="3.750" y="2.500" width="13.500" height="13.500" fill="url(#gBlueV)" stroke="#22324a" stroke-width=".9"/><rect x="8" y="7" width="14" height="14" fill="url(#gPale)" stroke="#22324a" stroke-width=".9"/><rect x="8" y="7" width="9.250" height="9" fill="url(#gPale)" stroke="#22324a" stroke-width=".8"/></svg>
<svg class="ic" style="left:778px;top:42px" width="24" height="24" viewBox="0 0 24 24"><rect x="3.750" y="2.500" width="13.500" height="13.500" fill="#0a0a0a" transform="translate(1,1.100)"/><rect x="8" y="7" width="14" height="14" fill="#0a0a0a" transform="translate(1,1.100)"/><rect x="3.750" y="2.500" width="13.500" height="13.500" fill="url(#gPale)" stroke="#22324a" stroke-width=".9"/><rect x="8" y="7" width="14" height="14" fill="url(#gPale)" stroke="#22324a" stroke-width=".9"/><rect x="8" y="7" width="9.250" height="9" fill="#dce8f8" stroke="#22324a" stroke-width=".8"/></svg>
<div class="vsep" style="left:808px;top:38px;height:32px"></div>
<div class="grip" style="left:812px;top:41px;height:27px"></div>
<svg class="ic" style="left:821px;top:42px" width="24" height="24" viewBox="0 0 24 24"><rect x="2.750" y="2.500" width="18.500" height="17" fill="#0a0a0a" transform="translate(1,1.100)"/><rect x="2.750" y="2.500" width="18.500" height="17" fill="#fff" stroke="#0a0a0a" stroke-width="1.600"/><path d="M5 16.500v-5l2.500-3 3 3.500 3.500-5.500 4.500 5v5z" fill="#2f64b0" stroke="#1a3a70" stroke-width=".5"/></svg>
<svg class="ic" style="left:852px;top:42px" width="24" height="24" viewBox="0 0 24 24"><rect x="2.750" y="2.500" width="18.500" height="17" fill="#0a0a0a" transform="translate(1,1.100)"/><rect x="2.750" y="2.500" width="18.500" height="17" fill="#fff" stroke="#0a0a0a" stroke-width="1.600"/><path d="M5 16.500v-5l2.500-3 3 3.500 3.500-5.500 4.500 5v5z" fill="#2f64b0" stroke="#1a3a70" stroke-width=".5"/><path d="M5 12l3.500-4 4 3.500 5.500-5.500" stroke="#e02020" stroke-width="1.400" fill="none"/></svg>
<div class="vsep" style="left:882px;top:38px;height:32px"></div>
<div class="grip" style="left:886px;top:41px;height:27px"></div>
<svg class="ic" style="left:895px;top:42px" width="24" height="24" viewBox="0 0 24 24"><path d="M3 12.700l4-4.800c3-1.200 7.500-1.200 10.500 0l4.500 4.800-4.500 4.800c-3 1.200-7.500 1.200-10.500 0z" fill="#0a0a0a" transform="translate(.9,1)"/><path d="M3 12.700l4-4.800c3-1.200 7.500-1.200 10.500 0l4.500 4.800-4.500 4.800c-3 1.200-7.500 1.200-10.500 0z" fill="#3468b0" stroke="#16202e" stroke-width=".9"/><path d="M4.500 11h16M4.500 14.500h16M8.500 7.500v10.500M12.500 7v11.500M16.500 7.500v10.500" stroke="#0f2140" stroke-width="1"/></svg>
<svg class="ic" style="left:926px;top:42px" width="24" height="24" viewBox="0 0 24 24"><path d="M5.250 4.500c0-3.500 14.250-3.500 14.250 0v13.500c0 3.500-14.250 3.500-14.250 0z" fill="#0a0a0a" transform="translate(.9,1)"/><path d="M5.250 4.500c0-3.500 14.250-3.500 14.250 0v13.500c0 3.500-14.250 3.500-14.250 0z" fill="#3468b0" stroke="#16202e"/><path d="M5.250 7.500c3 2.800 11.250 2.800 14.250 0M5.250 11.500c3 2.800 11.250 2.800 14.250 0M5.250 15.500c3 2.800 11.250 2.800 14.250 0M9.500 7v13.500M15.500 7v13.500" stroke="#0f2140" fill="none"/><path d="M5.750 4.500c0-2.800 13.250-2.800 13.250 0c0 2.600-13.250 2.600-13.250 0z" fill="#5a8ed0"/></svg>
<div class="vsep" style="left:956px;top:38px;height:32px"></div>
<div class="grip" style="left:960px;top:41px;height:27px"></div>
<svg class="ic" style="left:969px;top:42px" width="24" height="24" viewBox="0 0 24 24"><path d="M1 11.500C5 10.500 9 9 12 7C15 5 18 4 20 5.500L22.500 4C22.500 7 21 9 20.500 11C20 14 19 17 17.500 19C15 16 10 13.500 1 11.500Z" fill="url(#gTeal)" stroke="#1a5a5a" stroke-width=".7"/><path d="M6 11.500c5 .5 9 3 11.500 6.500" stroke="#5ab8b4" stroke-width=".9" fill="none"/></svg>
<div class="vsep" style="left:999px;top:38px;height:32px"></div>
<div class="grip" style="left:1003px;top:41px;height:27px"></div>
<svg class="ic" style="left:1012px;top:42px" width="24" height="24" viewBox="0 0 24 24"><path d="M3 20v-3.5c0-4.5 7-4.5 7 0v3.5z" fill="#111" transform="translate(.7,.7)"/><path d="M3 20v-3.5c0-4.5 7-4.5 7 0v3.5z" fill="#3f73b5" stroke="#16202e" stroke-width=".8"/><path d="M13 10v-3.5c0-4.5 7-4.5 7 0v3.5z" fill="#111" transform="translate(.7,.7)"/><path d="M13 10v-3.5c0-4.5 7-4.5 7 0v3.5z" fill="#3f73b5" stroke="#16202e" stroke-width=".8"/><path d="M5.500 13.500L13 5" stroke="#d02020" stroke-width="1"/><path d="M14.200 3.600l-3.300 1.200 2.200 2.200z" fill="#d02020"/></svg>
<svg class="ic" style="left:1043px;top:42px" width="24" height="24" viewBox="0 0 24 24"><path d="M3 11l5-5 5 4-5 5z" fill="#3f73b5" stroke="#16202e" stroke-width=".8"/><path d="M13 20v-3.5c0-4.5 7-4.5 7 0v3.5z" fill="#111" transform="translate(.7,.7)"/><path d="M13 20v-3.5c0-4.5 7-4.5 7 0v3.5z" fill="#3f73b5" stroke="#16202e" stroke-width=".8"/><path d="M17 4v5M14.500 6.500h5" stroke="#d02020" stroke-width="1.300"/></svg>
<svg class="ic" style="left:1074px;top:42px" width="24" height="24" viewBox="0 0 24 24"><path d="M3 9v-3.5c0-4.5 7-4.5 7 0v3.5z" fill="#111" transform="translate(.7,.7)"/><path d="M3 9v-3.5c0-4.5 7-4.5 7 0v3.5z" fill="#3f73b5" stroke="#16202e" stroke-width=".8"/><path d="M10 20v-3.5c0-4.5 7-4.5 7 0v3.5z" fill="#111" transform="translate(.7,.7)"/><path d="M10 20v-3.5c0-4.5 7-4.5 7 0v3.5z" fill="#3f73b5" stroke="#16202e" stroke-width=".8"/><path d="M11 4v12.500h9M11 16.500l-4 3.500" stroke="#d02020" stroke-width="1.100" fill="none"/><path d="M22 16.500l-3-1.800v3.600zM5.500 21.500l.8-3.400 2.300 2.300zM11 2.500l-1.500 2.500h3z" fill="#d02020"/></svg>
<svg class="ic" style="left:1105px;top:42px" width="24" height="24" viewBox="0 0 24 24"><path d="M8.5 8v-3.5c0-4.5 7-4.5 7 0v3.5z" fill="#111" transform="translate(.7,.7)"/><path d="M8.5 8v-3.5c0-4.5 7-4.5 7 0v3.5z" fill="#3f73b5" stroke="#16202e" stroke-width=".8"/><path d="M8.5 21v-3.5c0-4.5 7-4.5 7 0v3.5z" fill="#111" transform="translate(.7,.7)"/><path d="M8.5 21v-3.5c0-4.5 7-4.5 7 0v3.5z" fill="#3f73b5" stroke="#16202e" stroke-width=".8"/><path d="M3 11.800h18" stroke="#d02020" stroke-width="1.200"/></svg>
<svg class="ic" style="left:1136px;top:42px" width="24" height="24" viewBox="0 0 24 24"><path d="M2 19.3v-3.15c0-4.05 6.3-4.05 6.3 0v3.15z" fill="#111" transform="translate(.7,.7)"/><path d="M2 19.3v-3.15c0-4.05 6.3-4.05 6.3 0v3.15z" fill="#3f73b5" stroke="#16202e" stroke-width=".8"/><path d="M10 13.5v-5.25c0-6.75 10.5-6.75 10.5 0v5.25z" fill="#111" transform="translate(.7,.7)"/><path d="M10 13.5v-5.25c0-6.75 10.5-6.75 10.5 0v5.25z" fill="#3f73b5" stroke="#16202e" stroke-width=".8"/><path d="M4.500 13l5-5" stroke="#d02020" stroke-width="1"/><path d="M10.700 6.800l-3.300 1.200 2.200 2.200z" fill="#d02020"/></svg>
<svg class="ic" style="left:1167px;top:42px" width="24" height="24" viewBox="0 0 24 24"><path d="M2.100 15.900c3.500-.5 4.500-3 6-6.500c1.200-3 2.500-5.500 5.300-6.400l8.100 3.500c-2.800 1-4 3.500-5 6.500c-1.200 3.500-2.500 5.800-5 6.600z" fill="#0a0a0a" transform="translate(1,1.100)"/><path d="M2.100 15.900c3.500-.5 4.500-3 6-6.500c1.200-3 2.500-5.500 5.300-6.400l8.100 3.500c-2.800 1-4 3.500-5 6.500c-1.200 3.500-2.500 5.800-5 6.600z" fill="url(#gBlueV)" stroke="#1d3557" stroke-width=".7"/><path d="M6.500 17.800c3.200-.8 4.300-3.500 5.600-6.800c1.200-3 2.300-5.300 5.300-6.300M8 10l7 3" fill="none" stroke="#d03030" stroke-width=".9"/><path d="M4 3.500l7 7" stroke="#d02020" stroke-width="1"/><path d="M3 2.500l3.400.8-2.600 2.600z" fill="#d02020"/></svg>
<svg class="ic" style="left:1198px;top:42px" width="24" height="24" viewBox="0 0 24 24"><path d="M2.100 15.900c3.500-.5 4.500-3 6-6.500c1.200-3 2.500-5.500 5.300-6.400l8.100 3.500c-2.800 1-4 3.500-5 6.500c-1.200 3.500-2.500 5.800-5 6.600z" fill="#0a0a0a" transform="translate(1,1.100)"/><path d="M2.100 15.900c3.500-.5 4.500-3 6-6.500c1.200-3 2.500-5.500 5.300-6.400l8.100 3.500c-2.800 1-4 3.500-5 6.500c-1.200 3.500-2.500 5.800-5 6.600z" fill="url(#gBlueV)" stroke="#1d3557" stroke-width=".7"/><path d="M2.500 13.500c3-.5 4-3 5.300-6.200c1-2.600 2-4.500 4.200-5.300" fill="none" stroke="#f0f0f0" stroke-width="1.200"/><path d="M4 15c3-.5 4-3 5.300-6.200c1-2.600 2-4.500 4.200-5.300M9.500 18.800c3-.8 4-3.500 5.300-6.800c1.100-2.800 2.100-5 4.900-6" fill="none" stroke="#d03030" stroke-width="1"/></svg>
<svg class="ic" style="left:1229px;top:42px" width="24" height="24" viewBox="0 0 24 24"><path d="M4 19c5-1.500 5.500-6 8.500-8.500s5.500-3 7.500-6" stroke="#d02020" stroke-width="1.100" fill="none"/><path d="M7.500 16.500c3-2.500 3.500-5.500 8.500-8.500" stroke="#3f73b5" stroke-width="1.500" fill="none"/><path d="M3 20l2-1M20 4.500l1-1.500" stroke="#d02020" stroke-width="1.600"/></svg>
<svg class="ic" style="left:1260px;top:42px" width="24" height="24" viewBox="0 0 24 24"><path d="M5 5c0-3.500 14-3.500 14 0v13c0 3.500-14 3.500-14 0z" fill="#0a0a0a" transform="translate(1,1.100)"/><path d="M5 5c0-3.500 14-3.500 14 0v13c0 3.500-14 3.500-14 0z" fill="url(#gBlueV)" stroke="#16202e"/><path d="M5.500 5c0-3 13-3 13 0c0 2.800-13 2.800-13 0z" fill="#6a9ad8" stroke="#16202e" stroke-width=".7"/><path d="M5.500 13c3 1.800 10 1.800 13 0v3.500c-3 1.800-10 1.800-13 0z" fill="#e02020"/><path d="M10.500 7.500h3.500v7h-3.500z" fill="#e02020"/></svg>
<div class="grip" style="left:2px;top:75px;height:27px"></div>
<svg class="ic" style="left:10px;top:76px" width="24" height="24" viewBox="0 0 24 24"><path d="M4 7l4-4h13v12l-4 4h-13z" fill="#0a0a0a" transform="translate(1,1.100)"/><path d="M4 7l4-4h13v12l-4 4h-13z" fill="#3568a8" stroke="#16202e"/><path d="M4 7h13v12h-13z" fill="url(#gBlueV)" stroke="#16202e"/><path d="M4 7l4-4h13l-4 4z" fill="#5f92d2" stroke="#16202e" stroke-width=".8"/></svg>
<svg class="ic" style="left:41px;top:76px" width="24" height="24" viewBox="0 0 24 24"><path d="M5 5c0-3.500 14-3.500 14 0v12.500c0 3.500-14 3.500-14 0z" fill="#0a0a0a" transform="translate(1,1.100)"/><path d="M5 5c0-3.500 14-3.500 14 0v12.500c0 3.500-14 3.500-14 0z" fill="url(#gBlueV)" stroke="#16202e"/><path d="M5 5c0 3.400 14 3.400 14 0" fill="none" stroke="#16202e" stroke-width="1"/><path d="M5.500 5c0-3 13-3 13 0c0 2.800-13 2.800-13 0z" fill="#4f82c2"/></svg>
<svg class="ic" style="left:73px;top:76px" width="24" height="24" viewBox="0 0 24 24"><circle cx="11.500" cy="10.700" r="9.300" fill="#0a0a0a" transform="translate(1,1.100)"/><circle cx="11.500" cy="10.700" r="9.300" fill="url(#gBlueV)" stroke="#16202e"/></svg>
<svg class="ic" style="left:104px;top:76px" width="24" height="24" viewBox="0 0 24 24"><ellipse cx="11.500" cy="11" rx="9.500" ry="8" fill="#0a0a0a" transform="translate(1,1.100)"/><ellipse cx="11.500" cy="11" rx="9.500" ry="8" fill="url(#gBlueV)" stroke="#16202e"/><ellipse cx="11.400" cy="10.600" rx="3.600" ry="2.300" fill="#ececec" stroke="#16202e" stroke-width="1.100"/></svg>
<svg class="ic" style="left:135px;top:76px" width="24" height="24" viewBox="0 0 24 24"><path d="M11.500 2l7.500 15c0 3.400-15 3.400-15 0z" fill="#0a0a0a" transform="translate(1,1.100)"/><path d="M11.500 2l7.500 15c0 3.400-15 3.400-15 0z" fill="url(#gBlueV)" stroke="#16202e" stroke-linejoin="round"/></svg>
<svg class="ic" style="left:166px;top:76px" width="24" height="24" viewBox="0 0 24 24"><rect x="4" y="5" width="15" height="13.700" fill="#0a0a0a" transform="translate(1,1.100)"/><rect x="4" y="5" width="15" height="13.700" fill="url(#gBlueV)" stroke="#16202e"/></svg>
<svg class="ic" style="left:197px;top:76px" width="24" height="24" viewBox="0 0 24 24"><path d="M2 12.200l3.500-4.200c2-1 10-1 12 0l3.300 4.200-3.300 4.200c-2 1-10 1-12 0z" fill="#0a0a0a" transform="translate(1,1.100)"/><path d="M2 12.200l3.500-4.200c2-1 10-1 12 0l3.300 4.200-3.300 4.200c-2 1-10 1-12 0z" fill="url(#gBlueV)" stroke="#16202e"/></svg>
<svg class="ic" style="left:228px;top:76px" width="24" height="24" viewBox="0 0 24 24"><path d="M2.600 10.900l18.800 6.900" stroke="#2f5a8a" stroke-width="3.800"/><path d="M12 13l1.300-7.800" stroke="#2f5a8a" stroke-width="3.600"/></svg>
<div class="vsep" style="left:257px;top:72px;height:31px"></div>
<div class="grip" style="left:261px;top:75px;height:27px"></div>
<svg class="ic" style="left:271px;top:76px" width="24" height="24" viewBox="0 0 24 24"><path d="M5.900 15.900L17.100 5.250" stroke="#fff" stroke-width="1.400" transform="translate(.8,.9)"/><path d="M5.900 15.900L17.100 5.250" fill="none" stroke="#333" stroke-width="1.5" opacity=".45" transform="translate(.7,.8)"/><path d="M5.900 15.900L17.100 5.250" fill="none" stroke="#2c5fa6" stroke-width="1.5"/></svg>
<svg class="ic" style="left:301px;top:76px" width="24" height="24" viewBox="0 0 24 24"><path d="M5 3.750c5 1 9 1.500 12.100 3.150c1.600 5 1 9.500-2 12c-3 2-6.500.500-8-2.650" fill="none" stroke="#333" stroke-width="1.2" opacity=".45" transform="translate(.7,.8)"/><path d="M5 3.750c5 1 9 1.500 12.100 3.150c1.600 5 1 9.500-2 12c-3 2-6.500.500-8-2.650" fill="none" stroke="#2c5fa6" stroke-width="1.2"/><rect x="3.800" y="2.600" width="2.400" height="2.400" fill="#111"/><rect x="15.900" y="5.700" width="2.400" height="2.400" fill="#111"/><rect x="5.900" y="15" width="2.400" height="2.400" fill="#111"/></svg>
<svg class="ic" style="left:332px;top:76px" width="24" height="24" viewBox="0 0 24 24"><rect x="4" y="5" width="15" height="13.700" fill="#0a0a0a" transform="translate(1,1.100)"/><rect x="4" y="5" width="15" height="13.700" fill="url(#gBlueV)" stroke="#16202e"/></svg>
<svg class="ic" style="left:363px;top:76px" width="24" height="24" viewBox="0 0 24 24"><path d="M4 7l4-4h13.400l-4.400 4v8.500h4.400l-4.400 3.500h-13z" fill="#0a0a0a" transform="translate(1,1.100)"/><path d="M4 7h12.500v12h-12.500z" fill="url(#gBlueV)" stroke="#16202e"/><path d="M4 7l4-4h13.400l-4.900 4z" fill="#5f92d2" stroke="#16202e" stroke-width=".9"/><path d="M16.500 16.300h4.500l-4.500 2.700z" fill="#3568a8" stroke="#16202e" stroke-width=".8"/></svg>
<svg class="ic" style="left:394px;top:76px" width="24" height="24" viewBox="0 0 24 24"><path d="M4 7l4-4h13v12l-4 4h-13z" fill="#0a0a0a" transform="translate(1,1.100)"/><path d="M4 7l4-4h13v12l-4 4h-13z" fill="#3568a8" stroke="#16202e"/><path d="M4 7h13v12h-13z" fill="url(#gBlueV)" stroke="#16202e"/><path d="M4 7l4-4h13l-4 4z" fill="#5f92d2" stroke="#16202e" stroke-width=".8"/></svg>
<svg class="ic" style="left:425px;top:76px" width="24" height="24" viewBox="0 0 24 24"><circle cx="7.750" cy="8.400" r="4.600" fill="#0a0a0a" transform="translate(.9,1)"/><path d="M9.400 9l3-3h9.500v9.500l-3 3h-9.500z" fill="#0a0a0a" transform="translate(1,1.100)"/><circle cx="7.750" cy="8.400" r="4.600" fill="url(#gBlueV)" stroke="#16202e"/><path d="M9.400 9l3-3h9.500v9.500l-3 3h-9.500z" fill="#3568a8" stroke="#16202e"/><path d="M9.400 9h9.500v9.500h-9.500z" fill="url(#gBlueV)" stroke="#16202e" stroke-width=".9"/><path d="M9.400 12.700a4.600 4.600 0 0 0 2.900-4.300" fill="none" stroke="#555" stroke-width=".8"/></svg>
<div class="vsep" style="left:455px;top:72px;height:31px"></div>
<div class="grip" style="left:459px;top:75px;height:27px"></div>
<svg class="ic" style="left:468px;top:76px" width="24" height="24" viewBox="0 0 24 24"><rect x="11" y="11" width="2.600" height="2.600" fill="#1d3557"/></svg>
<svg class="ic" style="left:499px;top:76px" width="24" height="24" viewBox="0 0 24 24"><path d="M6 3.500h9l4.500 4.500v13h-13.500z" fill="#222" transform="translate(.9,.9)"/><path d="M6 3.500h9l4.500 4.500v13h-13.500z" fill="#eef3fb" stroke="#4a5f8a" stroke-width=".9"/><path d="M8 8.500h3M12 8.500h2M8 10.500h5M14 10.500h3.500M8 12.500h3M12 12.500h5.500M8 14.500h9.500M8 16.500h4M13 16.500h4.500M8 18.500h6" stroke="#2f5aa8" stroke-width="1"/><path d="M15 3.500v4.500h4.500" fill="#fff" stroke="#4a5f8a" stroke-width=".9"/></svg>
<svg class="ic" style="left:530px;top:76px" width="24" height="24" viewBox="0 0 24 24"><path d="M4 7l4-4h13v12l-4 4h-13z" fill="#0a0a0a" transform="translate(1,1.100)"/><path d="M4 7l4-4h13v12l-4 4h-13z" fill="#3568a8" stroke="#16202e"/><path d="M4 7h13v12h-13z" fill="url(#gBlueV)" stroke="#16202e"/><path d="M4 7l4-4h13l-4 4z" fill="#5f92d2" stroke="#16202e" stroke-width=".8"/><path d="M12.300 9.800v4M10.300 11.800h4" stroke="#f8f000" stroke-width="1.300"/></svg>
<svg class="ic" style="left:561px;top:76px" width="24" height="24" viewBox="0 0 24 24"><path d="M6 5.500c0-3.300 13-3.300 13 0v13c0 3.300-13 3.300-13 0z" fill="#0a0a0a" transform="translate(1,1.100)"/><path d="M6 5.500c0-3.300 13-3.300 13 0v13c0 3.300-13 3.300-13 0z" fill="url(#gBlueV)" stroke="#16202e"/><path d="M6 5.500c0 3.200 13 3.200 13 0" fill="none" stroke="#16202e" stroke-width=".9"/><path d="M6.500 5.500c0-2.800 12-2.800 12 0c0 2.600-12 2.600-12 0z" fill="#4f82c2"/><path d="M12.200 2v3.500M14 12.250h7M12.200 12.250l-7 6M4 12.250h1.500M18.500 4.500l1.200-1.200M12.500 21v1.200" stroke="#f8f000" stroke-width="1.200" fill="none"/><path d="M23 12.250l-3-1.800v3.600zM4 19.300l1-3.300 2.200 2.300z" fill="#f8f000"/></svg>
<svg class="ic" style="left:592px;top:76px" width="24" height="24" viewBox="0 0 24 24"><path d="M3 19.500l7.500-7.250h12.500l-7.250 7.250z" fill="#0a0a0a" transform="translate(.9,1.100)"/><path d="M3 19.500l7.500-7.250h12.500l-7.250 7.250z" fill="url(#gBlueV)" stroke="#16202e" stroke-width=".8"/><path d="M12.400 5v11" stroke="#e02020" stroke-width="1.200"/><path d="M12.400 3.500l-2.200 3.800h4.400zM12.400 17l-1.800-2.600h3.600zM10.500 9.500h3.800" fill="#e02020" stroke="#e02020" stroke-width=".8"/></svg>
<div class="tsep" style="left:623px;top:76px;height:24px"></div>
<svg class="ic" style="left:629px;top:76px" width="24" height="24" viewBox="0 0 24 24"><path d="M3 6l4.500-4.300h15.500v15l-4.500 4.300h-15.500z" fill="#b4b4b4" opacity=".75" stroke="#333" stroke-width="1"/><path d="M3 6h15.500v15M18.500 6l4.500-4.300M3 21l4.500-4.300h15.500M7.500 1.700v15" fill="none" stroke="#444" stroke-width=".8"/><circle cx="12.900" cy="11.600" r="7.300" fill="#0a0a0a" transform="translate(.7,.8)"/><circle cx="12.900" cy="11.600" r="7.300" fill="url(#gBlueV)" stroke="#16202e" stroke-width=".9"/><ellipse cx="12.900" cy="7" rx="4.800" ry="1.600" fill="#6a9ad8" opacity=".8"/><path d="M3 6h15.500v15h-15.500z" fill="none" stroke="#555" stroke-width=".7"/></svg>
<svg class="ic" style="left:660px;top:76px" width="24" height="24" viewBox="0 0 24 24"><path d="M3 10.500h9v11h-9zM14.400 10.500h8.600v11h-8.600z" fill="#0a0a0a" transform="translate(.6,.7)"/><path d="M3 10.500h9v11h-9zM14.400 10.500h8.600v11h-8.600z" fill="url(#gBlueV)" stroke="#16202e" stroke-width=".8"/><path d="M7.500 13v8.500M18.500 13v8.500M3 13.500h9M14.400 13.500h8.600" stroke="#16202e" stroke-width=".7" opacity=".7"/><path d="M3 6.500h6M17 6.500h6" stroke="#e02020" stroke-width="1.300"/><path d="M9.500 6.500h7" stroke="#e8e800" stroke-width="1.300"/><path d="M9.500 3.500v9M16.500 3.500v9" stroke="#e02020" stroke-width="1.100"/><path d="M9.500 6.500l-3-2v4zM16.500 6.500l3-2v4z" fill="#e02020"/></svg>
<svg class="ic" style="left:691px;top:76px" width="24" height="24" viewBox="0 0 24 24"><path d="M3 9.500h9v12h-9z" fill="#0a0a0a" transform="translate(.6,.7)"/><path d="M3 9.500h9v12h-9z" fill="url(#gBlueV)" stroke="#16202e" stroke-width=".8"/><path d="M7.500 12v9.500M3 12.500h9" stroke="#16202e" stroke-width=".7" opacity=".7"/><path d="M3 9.500h9l5-6" stroke="#e02020" stroke-width="1.300" fill="none"/><path d="M22.750 2v19l-8.200-10z" fill="#0a0a0a" transform="translate(.5,.7)"/><path d="M22.750 2v19l-8.200-10z" fill="#2a5a9a" stroke="#16202e" stroke-width=".8"/><path d="M22.750 2l-3 9 3 10" fill="#3f74b6" stroke="#16202e" stroke-width=".6"/><path d="M6.500 8.500c.5-4 5-5.500 8.500-3.500" stroke="#e8e800" stroke-width="1.200" fill="none"/></svg>
<svg class="ic" style="left:722px;top:76px" width="24" height="24" viewBox="0 0 24 24"><text x="14.500" y="8.500" font-family="Liberation Sans, sans-serif" font-size="5.800" fill="#444" text-anchor="middle">BOX</text><path d="M4.500 19.500l3.500-7.500h13" stroke="#222" stroke-width="1.200" fill="none"/></svg>
<svg class="ic" style="left:753px;top:76px" width="24" height="24" viewBox="0 0 24 24"><rect x="3.200" y="8.500" width="19.600" height="12" fill="#0a0a0a" transform="translate(.3,.8)"/><rect x="3.200" y="8.500" width="19.600" height="12" fill="#cce4b4" stroke="#3a4a28" stroke-width=".8"/><path d="M5.500 9v4M8 9v2.500M10.500 9v4M13 9v2.500M15.500 9v4M18 9v2.500M20.500 9v4" stroke="#111" stroke-width="1"/><text x="13" y="19" font-family="Liberation Sans, sans-serif" font-size="6" font-weight="bold" fill="#111" text-anchor="middle">1 2 3</text><path d="M4.500 5h16.200M4.500 2.200v6.300M20.700 2.200v6.300" stroke="#e02020" stroke-width="1.200"/><path d="M7.500 3.500v3M17.700 3.500v3" stroke="#e02020" stroke-width="1"/></svg>
<div class="tsep" style="left:784px;top:76px;height:24px"></div>
<svg class="ic" style="left:791px;top:76px" width="24" height="24" viewBox="0 0 24 24"><path d="M6.500 4.200l14.400 5.600-13.100 10.600z" fill="#3a6cb0" stroke="#e8e000" stroke-width="1.400" stroke-linejoin="round"/><path d="M7.750 6l4.350 8.750" stroke="#16202e" stroke-width=".9"/><path d="M7.200 6l4.500 9-4 4z" fill="#5a8cd0" opacity=".7"/></svg>
<svg class="ic" style="left:822px;top:76px" width="24" height="24" viewBox="0 0 24 24"><path d="M4.500 9l4.500-5.500h13v11l-4.500 5h-13z" fill="#0a0a0a" transform="translate(.9,1)"/><path d="M4.500 9l4.500-5.500h13l-4.500 5.500z" fill="#b0b0b0" stroke="#555" stroke-width=".8"/><path d="M17.500 9l4.500-5.500v11l-4.500 5z" fill="#e8e040" stroke="#d03030" stroke-width="1"/><path d="M4.500 9h13v10.500h-13z" fill="#f4f028" stroke="#5a5400" stroke-width="1"/><path d="M9 3.500v5M22 14.500h-4" stroke="#d03030" stroke-width=".8"/></svg>
<div class="tsep" style="left:852px;top:76px;height:24px"></div>
<svg class="ic" style="left:858px;top:76px" width="24" height="24" viewBox="0 0 24 24"><text x="12" y="21" font-family="Liberation Sans, sans-serif" font-size="25" font-weight="bold" fill="#111" text-anchor="middle" transform="translate(.8,.8)">?</text><text x="12" y="21" font-family="Liberation Sans, sans-serif" font-size="25" font-weight="bold" fill="#f0d800" stroke="#8a7a00" stroke-width=".6" text-anchor="middle">?</text></svg>
<svg class="ic" style="left:889px;top:76px" width="24" height="24" viewBox="0 0 24 24"><path d="M14 3c-2.500 3.500-3.500 6.500-2.500 9.500M20 6c-3 1-6 3.500-8.500 6.500c-1.500 2-1.500 5 .5 6.500c-2 1.500-5 .500-6-2" fill="none" stroke="#111" stroke-width="2.400" stroke-linecap="round"/><path d="M14 3c-2.500 3.500-3.500 6.500-2.500 9.500M20 6c-3 1-6 3.500-8.500 6.500c-1.500 2-1.500 5 .5 6.500c-2 1.500-5 .500-6-2" fill="none" stroke="#f0f0f0" stroke-width=".9" stroke-linecap="round"/><circle cx="5.500" cy="16" r="1.800" fill="#58c8e8" stroke="#111" stroke-width=".7"/></svg>
<svg class="ic" style="left:920px;top:76px" width="24" height="24" viewBox="0 0 24 24"><path d="M6 6l5-3h7l-1 14-6 4h-5z" fill="#c8a8a8" stroke="#6a4a4a"/><path d="M9 7h5v11h-5z" fill="#e8d0d0" stroke="#6a4a4a"/><path d="M16 5v12" stroke="#6a4a4a"/><circle cx="5" cy="16" r="1.600" fill="#7ac0e0"/></svg>
<svg class="ic" style="left:951px;top:76px" width="24" height="24" viewBox="0 0 24 24"><ellipse cx="7" cy="9" rx="6" ry="5" fill="url(#gBlueR)" stroke="#16202e"/><path d="M9 11l3-3h10v10l-3 3h-10z" fill="#2f64b0" stroke="#16202e"/><path d="M9 11h10v10h-10z" fill="url(#gBlue)" stroke="#16202e"/></svg>
<svg class="ic" style="left:982px;top:76px" width="24" height="24" viewBox="0 0 24 24"><path d="M3 14l8-9 4 2-2 5 8 9" stroke="#e8d800" stroke-width="2" fill="none"/><path d="M5 21c0-5 3-9 7-11l4-6 4 1-3 5c2 4 0 9-3 12" fill="#e8e8e8" stroke="#222" stroke-width="1.200"/><path d="M9 12l4 8M7 8l2 2" stroke="#222" stroke-width="1.600"/><path d="M5 6l2 2" stroke="#e02020" stroke-width="2"/></svg>
<svg class="ic" style="left:1013px;top:76px" width="24" height="24" viewBox="0 0 24 24"><path d="M3 9l8-5 10 2v8l-7 7-11-4z" fill="#3a84c0" stroke="#1d4f80"/><path d="M3 9l8-5 10 2-8 5z" fill="#4aa0d8"/><circle cx="11" cy="15" r="4.500" fill="#9a8ad0"/><ellipse cx="11" cy="16" rx="2.500" ry="2" fill="#c8b8f0"/></svg>
<div class="dock-title"><span>Object Browser</span><svg style="position:absolute;left:244px;top:4px" width="10" height="10" viewBox="0 0 10 10"><path d="M3.500 1h5.500v4.500h-2M1 3.500h5.500v5.500h-5.500z" fill="none" stroke="#1a1a1a" stroke-width="1.300"/><path d="M1 4.300h5.500M3.500 1.800h5.500" stroke="#1a1a1a" stroke-width="1.700"/></svg><svg style="position:absolute;left:264px;top:4px" width="10" height="10" viewBox="0 0 10 10"><path d="M1.500 1.500l7 7M8.500 1.500l-7 7" stroke="#1a1a1a" stroke-width="1.900"/></svg></div>
<div class="tree"></div>
<div class="hdrline" style="left:33px;top:128px;height:24px"></div>
<div class="hdrline" style="left:267px;top:128px;height:24px"></div>
<div class="txt" style="left:136px;top:134px">Name</div>
<svg class="ic" style="left:3px;top:136px" width="16" height="10" viewBox="0 0 16 10"><path d="M.8 5C3.500.8 12.500.8 15.200 5C12.500 9.200 3.500 9.200.8 5z" fill="#fff" stroke="#222" stroke-width="1.100"/><circle cx="8.300" cy="5" r="3.200" fill="#1d3a8a"/><circle cx="8.300" cy="5" r="1.500" fill="#0a1030"/><circle cx="7.200" cy="3.800" r=".9" fill="#fff"/></svg>
<div class="sel" style="left:0px;top:254px;width:34px;height:17px"></div>
<div class="sel" style="left:74px;top:254px;width:194px;height:17px"></div>
<svg class="ic" style="left:38px;top:155px" width="10" height="8" viewBox="0 0 10 8"><path d="M1 1.500l4 4 4-4" fill="none" stroke="#222" stroke-width="1.300"/></svg>
<svg class="ic" style="left:57px;top:151px" width="16" height="16" viewBox="0 0 20 20"><g transform="translate(-2.800,-3.500)"><g transform="translate(.8,0)"><path d="M6.500 8C8 6.500 10.500 7 11.300 8.800L12.200 10L13.100 8.800C14 7 16.500 6.500 18 8C19 9.200 18.700 11 17.600 12.200C20 13.200 21.300 16 20.200 18C19.200 20 16.200 20 14.800 18.200L13.800 16.800H10.600L9.600 18.200C8.200 20 5.200 20 4.200 18C3.100 16 4.400 13.200 6.800 12.200C5.700 11 5.400 9.200 6.500 8Z" fill="#0c1420" transform="translate(1.100,1.100)"/><path d="M6.500 8C8 6.500 10.500 7 11.300 8.800L12.200 10L13.100 8.800C14 7 16.500 6.500 18 8C19 9.200 18.700 11 17.600 12.200C20 13.200 21.300 16 20.200 18C19.200 20 16.200 20 14.800 18.200L13.800 16.800H10.600L9.600 18.200C8.200 20 5.200 20 4.200 18C3.100 16 4.400 13.200 6.800 12.200C5.700 11 5.400 9.200 6.500 8Z" fill="url(#gGeom)" stroke="#22385a" stroke-width=".6"/><ellipse cx="7" cy="16.300" rx="1.900" ry="2.500" fill="#68dcf4" transform="rotate(35 7 16.300)"/><ellipse cx="17.400" cy="16.300" rx="1.900" ry="2.500" fill="#68dcf4" transform="rotate(-35 17.400 16.300)"/></g></g></svg>
<div class="txt" style="left:78px;top:152px">Geometry</div>
<svg class="ic" style="left:3px;top:172px" width="16" height="10" viewBox="0 0 16 10"><path d="M.8 5C3.500.8 12.500.8 15.200 5C12.500 9.200 3.500 9.200.8 5z" fill="#f4f4f4" stroke="#a0a0a0" stroke-width="1"/><circle cx="8.300" cy="5" r="3" fill="#b4b4b4"/><circle cx="7.300" cy="4" r="1" fill="#e8e8e8"/></svg>
<svg class="ic" style="left:3px;top:189px" width="16" height="10" viewBox="0 0 16 10"><path d="M.8 5C3.500.8 12.500.8 15.200 5C12.500 9.200 3.500 9.200.8 5z" fill="#f4f4f4" stroke="#a0a0a0" stroke-width="1"/><circle cx="8.300" cy="5" r="3" fill="#b4b4b4"/><circle cx="7.300" cy="4" r="1" fill="#e8e8e8"/></svg>
<svg class="ic" style="left:3px;top:206px" width="16" height="10" viewBox="0 0 16 10"><path d="M.8 5C3.500.8 12.500.8 15.200 5C12.500 9.200 3.500 9.200.8 5z" fill="#f4f4f4" stroke="#a0a0a0" stroke-width="1"/><circle cx="8.300" cy="5" r="3" fill="#b4b4b4"/><circle cx="7.300" cy="4" r="1" fill="#e8e8e8"/></svg>
<svg class="ic" style="left:3px;top:223px" width="16" height="10" viewBox="0 0 16 10"><path d="M.8 5C3.500.8 12.500.8 15.200 5C12.500 9.200 3.500 9.200.8 5z" fill="#f4f4f4" stroke="#a0a0a0" stroke-width="1"/><circle cx="8.300" cy="5" r="3" fill="#b4b4b4"/><circle cx="7.300" cy="4" r="1" fill="#e8e8e8"/></svg>
<svg class="ic" style="left:3px;top:240px" width="16" height="10" viewBox="0 0 16 10"><path d="M.8 5C3.500.8 12.500.8 15.200 5C12.500 9.200 3.500 9.200.8 5z" fill="#f4f4f4" stroke="#a0a0a0" stroke-width="1"/><circle cx="8.300" cy="5" r="3" fill="#b4b4b4"/><circle cx="7.300" cy="4" r="1" fill="#e8e8e8"/></svg>
<svg class="ic" style="left:3px;top:257px" width="16" height="10" viewBox="0 0 16 10"><path d="M.8 5C3.500.8 12.500.8 15.200 5C12.500 9.200 3.500 9.200.8 5z" fill="#8fb8dc" stroke="#dce6f0" stroke-width="1"/><circle cx="8.300" cy="5" r="3.200" fill="#24508a"/><circle cx="8.300" cy="5" r="1.500" fill="#0a1830"/><circle cx="7.200" cy="3.800" r=".8" fill="#c8d8f0"/></svg>
<svg class="ic" style="left:79px;top:172.500px" width="9" height="9" viewBox="0 0 9 9"><path d="M4.500 0v9M0 4.500h9" stroke="#2a4a7a" stroke-width="1"/></svg>
<div class="txt" style="left:96px;top:169px">O</div>
<svg class="ic" style="left:79px;top:189px" width="10" height="10" viewBox="0 0 10 10"><path d="M0 10L10 0" stroke="#2a4a7a" stroke-width="1"/></svg>
<div class="txt" style="left:96px;top:186px">OX</div>
<svg class="ic" style="left:79px;top:206px" width="10" height="10" viewBox="0 0 10 10"><path d="M0 10L10 0" stroke="#2a4a7a" stroke-width="1"/></svg>
<div class="txt" style="left:96px;top:203px">OY</div>
<svg class="ic" style="left:79px;top:223px" width="10" height="10" viewBox="0 0 10 10"><path d="M0 10L10 0" stroke="#2a4a7a" stroke-width="1"/></svg>
<div class="txt" style="left:96px;top:220px">OZ</div>
<svg class="ic" style="left:78px;top:238.5px" width="13" height="13" viewBox="0 0 13 13"><rect x="1" y="1" width="11" height="11" fill="#0c1424"/><path d="M6.500 0l6.500 6.500-6.500 6.500-6.500-6.500z" fill="url(#gShp)" stroke="#0c1424" stroke-width=".6"/><path d="M3.200 3.200l6.600 6.600M9.800 3.200l-6.600 6.600" stroke="#0c1424" stroke-width=".8"/><path d="M1.500 1.500h2.500l-2.500 2.500zM11.500 1.500v2.500l-2.500-2.500zM1.500 11.500v-2.500l2.500 2.500zM11.500 11.500h-2.500l2.500-2.500z" fill="#3a64a8"/></svg>
<div class="txt" style="left:97px;top:237px">14-connection.</div>
<svg class="ic" style="left:60px;top:256px" width="7" height="10" viewBox="0 0 7 10"><path d="M1.500 1l4 4-4 4" fill="none" stroke="#8c8c8c" stroke-width="1.600"/></svg>
<svg class="ic" style="left:78px;top:255.5px" width="13" height="13" viewBox="0 0 13 13"><rect x="1" y="1" width="11" height="11" fill="#0c1424"/><path d="M6.500 0l6.500 6.500-6.500 6.500-6.500-6.500z" fill="url(#gShp)" stroke="#0c1424" stroke-width=".6"/><path d="M3.200 3.200l6.600 6.600M9.800 3.200l-6.600 6.600" stroke="#0c1424" stroke-width=".8"/><path d="M1.500 1.500h2.500l-2.500 2.500zM11.500 1.500v2.500l-2.500-2.500zM1.500 11.500v-2.500l2.500 2.500zM11.500 11.500h-2.500l2.500-2.500z" fill="#3a64a8"/></svg>
<div class="txt" style="left:96px;top:254px;color:#fff">Sewing_1</div>
<div class="vline-h"></div><div class="vline-v"></div>
<div class="vtitle"><span>OCC scene:1 - viewer:1</span></div>
<div class="vtool"></div>
<div class="grip" style="left:292px;top:133px;height:27px"></div>
<div class="hl" style="left:361px;top:131px;width:30px;height:29px"></div>
<div class="hl" style="left:392px;top:131px;width:30px;height:29px"></div>
<div class="hl" style="left:423px;top:131px;width:30px;height:29px"></div>
<div class="hl" style="left:454px;top:131px;width:30px;height:29px"></div>
<div class="hl" style="left:548px;top:131px;width:30px;height:29px"></div>
<div class="hl" style="left:579px;top:131px;width:30px;height:29px"></div>
<div class="hl" style="left:1106px;top:131px;width:30px;height:29px"></div>
<svg class="ic" style="left:302px;top:134px" width="24" height="24" viewBox="0 0 24 24"><path d="M5.500 5.500h3.500v-1.500h-3v1.500zM10 4h3.500v1.500h5.500v10h-4v3l-4 2h-4l-2-2v-3z" fill="#2c2c2c" transform="translate(1.600,1.700)"/><path d="M5.500 6h13.500v9.500h-13.500z" fill="#3a3a3a"/><path d="M6 4h3.200v2h-3.200zM10.300 4h3.200v2h-3.200z" fill="#3a3a3a"/><path d="M6.500 7h11.500v1.800h-11.500z" fill="#9aa8b0"/><path d="M12.500 8.800h4.800v6.700h-4.800z" fill="#d4dcdc"/><path d="M6.500 8.800h5v3h-5z" fill="#8a989c"/><ellipse cx="15" cy="9.600" rx="1.200" ry=".7" fill="#f02020"/><path d="M4 13.500l3.500-3h5.500v5l-3.500 3h-5.500z" fill="#1a1a1a"/><path d="M4.700 13.800h4.600v4.200h-4.600z" fill="#e8e8e8"/><path d="M4.700 13.800l2.800-2.600h4.800l-3 2.600z" fill="#fafafa"/><path d="M9.300 13.800l3-2.600v4l-3 2.800z" fill="#d0d0d0"/><path d="M4.700 17.200h4.600v.8h-4.600z" fill="#a8e8f0"/></svg>
<svg class="ic" style="left:333px;top:134px" width="24" height="24" viewBox="0 0 24 24"><path d="M7.500 4.500c3.500-1.500 7 .5 9.500 4.500c2.500 4 3 8 .5 10c-2.500 1.800-7 1-9.500-1.500c-2.500-2.800-3.500-7-2.500-10c.4-1.400 1-2.500 2-3z" fill="#9a9a9a" opacity=".55" transform="translate(.8,.9)"/><path d="M7.500 4.500c3.500-1.500 7 .5 9.500 4.500c2.500 4 3 8 .5 10c-2.500 1.800-7 1-9.500-1.500c-2.500-2.800-3.500-7-2.500-10c.4-1.400 1-2.500 2-3z" fill="url(#gMouse)" stroke="#b0b0b0" stroke-width=".8"/><ellipse cx="10.800" cy="8.800" rx="1.100" ry="1.900" fill="#3a64d8" transform="rotate(-20 10.800 8.800)"/><path d="M8.300 4.300l-.4-1" stroke="#888" stroke-width=".8"/></svg>
<svg class="ic" style="left:364px;top:134px" width="24" height="24" viewBox="0 0 24 24"><path d="M7.800 2.500v20M3 8.200h20" stroke="#222" stroke-width="1"/><rect x="5.800" y="6.200" width="4" height="4" fill="none" stroke="#222" stroke-width=".8"/><path d="M14.500 16l-5 5.500" stroke="#3a2a20" stroke-width="2.600" stroke-linecap="round"/><circle cx="17.300" cy="13.300" r="4.200" fill="#b8e0dc" stroke="#444" stroke-width="1.400"/><path d="M15 12c.5-1.500 2-2.300 3.500-2" stroke="#fff" stroke-width="1" fill="none"/></svg>
<svg class="ic" style="left:395px;top:134px" width="24" height="24" viewBox="0 0 24 24"><rect x="4.500" y="4.500" width="16.500" height="16" fill="#1f5fb8" stroke="#0a1a3a" stroke-width="1.100"/><path d="M10.5 9v11l2.500-2.500 2 4.500 2-1-2-4.500h3.500z" fill="#111" stroke="#fff" stroke-width=".7"/></svg>
<svg class="ic" style="left:426px;top:134px" width="24" height="24" viewBox="0 0 24 24"><rect x="4.500" y="4.500" width="16.500" height="16" fill="#c8a820" stroke="#2a2408" stroke-width="1.100"/><path d="M10.5 9v11l2.500-2.500 2 4.500 2-1-2-4.500h3.500z" fill="#111" stroke="#fff" stroke-width=".7"/></svg>
<svg class="ic" style="left:457px;top:134px" width="24" height="24" viewBox="0 0 24 24"><rect x="4.500" y="7.500" width="17" height="11" fill="#a8b4e4" stroke="#10184a" stroke-width="1.200"/></svg>
<svg class="ic" style="left:488px;top:134px" width="24" height="24" viewBox="0 0 24 24"><path d="M3.700 11.300l7.200-7.100 9.900 3.600-2.400 10.200-10.200.4z" fill="#c4c4e4" stroke="#2a2a4a" stroke-width="1.100"/></svg>
<svg class="ic" style="left:519px;top:134px" width="24" height="24" viewBox="0 0 24 24"><circle cx="11.400" cy="11.300" r="8" fill="#c4c4e4" stroke="#2a2a4a" stroke-width="1.100"/></svg>
<svg class="ic" style="left:551px;top:134px" width="24" height="24" viewBox="0 0 24 24"><path d="M9.500 6.500l.8 9 10 .7M10.300 15.500l-4.500 4" stroke="#111" stroke-width="2.400" fill="none" stroke-linecap="round"/><path d="M9.500 6.500l.8 9 10 .7M10.300 15.500l-4.500 4" stroke="#a8a060" stroke-width=".8" fill="none"/><path d="M9.300 4l-1.600 3.200h3.400z" fill="#111"/></svg>
<svg class="ic" style="left:582px;top:134px" width="24" height="24" viewBox="0 0 24 24"><path d="M12.800 3l8.200 3.500v9l-8.200 4-8.200-4V6.500z" fill="#c8c8d0" transform="translate(.8,.9)"/><path d="M12.800 3l8.200 3.500v9l-8.200 4-8.200-4V6.500z" fill="#fbfbfb" stroke="#d8d8e0" stroke-width=".8"/><path d="M4.600 6.500l8.200 3.800 8.200-3.800M12.800 10.300v9.200" stroke="#d0d0d8" fill="none" stroke-width=".9"/><path d="M12.800 10.300l8.200-3.800v9l-8.200 4z" fill="#ececf0"/><path d="M3 4v15l9 4" stroke="#c0c0c8" stroke-width=".7" stroke-dasharray="1 1.500" fill="none"/><circle cx="3" cy="3.500" r=".8" fill="#e8e060"/><circle cx="13" cy="22" r=".8" fill="#e8e060"/></svg>
<svg class="ic" style="left:613px;top:134px" width="24" height="24" viewBox="0 0 24 24"><path d="M10.500 12.500l-5.800 6.800" stroke="#2a2220" stroke-width="2.500" stroke-linecap="round"/><circle cx="13.800" cy="8.800" r="4.900" fill="#c4e4e0" stroke="#3a3a3a" stroke-width="1.400"/><path d="M11 8c.5-1.800 2-2.800 3.800-2.600" stroke="#fff" stroke-width="1" fill="none"/><path d="M2.500 6.500V3.500h3.500M17 3.500h3.200v3M20.200 17.500v3h-3.200M5.500 20.500h-3v-3" stroke="#f0e800" stroke-width="1.100" fill="none"/></svg>
<svg class="ic" style="left:644px;top:134px" width="24" height="24" viewBox="0 0 24 24"><rect x="4.300" y="3" width="15.600" height="15.400" fill="none" stroke="#444" stroke-width=".9"/><path d="M10.500 12.500l-5.800 6.800" stroke="#2a2220" stroke-width="2.500" stroke-linecap="round"/><circle cx="13.800" cy="8.800" r="4.900" fill="#c4e4e0" stroke="#3a3a3a" stroke-width="1.400"/><path d="M11 8c.5-1.800 2-2.800 3.800-2.600" stroke="#fff" stroke-width="1" fill="none"/><path d="M3 2l2 2M19 19l2 2" stroke="#f0e800" stroke-width="1.200" fill="none"/></svg>
<svg class="ic" style="left:674px;top:134px" width="24" height="24" viewBox="0 0 24 24"><path d="M10.500 12.500l-5.800 6.800" stroke="#2a2220" stroke-width="2.500" stroke-linecap="round"/><circle cx="13.800" cy="8.800" r="4.900" fill="#c4e4e0" stroke="#3a3a3a" stroke-width="1.400"/><path d="M11 8c.5-1.800 2-2.800 3.800-2.600" stroke="#fff" stroke-width="1" fill="none"/><rect x="13" y="13.500" width="7" height="6.500" fill="#2f64b0" stroke="#fff" stroke-width=".9"/></svg>
<svg class="ic" style="left:705px;top:134px" width="24" height="24" viewBox="0 0 24 24"><path d="M10.500 12.500l-5.800 6.800" stroke="#2a2220" stroke-width="2.500" stroke-linecap="round"/><circle cx="13.800" cy="8.800" r="4.900" fill="#c4e4e0" stroke="#3a3a3a" stroke-width="1.400"/><path d="M11 8c.5-1.800 2-2.800 3.800-2.600" stroke="#fff" stroke-width="1" fill="none"/><path d="M18.500 15.500v5.500M15.700 18.200h5.600" stroke="#f0e800" stroke-width="1.300"/><path d="M3 3.500h4.500" stroke="#f0e800" stroke-width="1.200"/></svg>
<svg class="ic" style="left:735px;top:134px" width="24" height="24" viewBox="0 0 24 24"><g transform="rotate(0 12.500 11.700)"><path d="M12.500 2l3.400 4h-1.900v2.800h-3v-2.800h-1.900z" fill="#0a0a0a" transform="translate(.6,.7)"/><path d="M12.500 2l3.400 4h-1.900v2.800h-3v-2.800h-1.900z" fill="#e04848" stroke="#701010" stroke-width=".7"/></g><g transform="rotate(90 12.500 11.700)"><path d="M12.500 2l3.400 4h-1.900v2.800h-3v-2.800h-1.900z" fill="#0a0a0a" transform="translate(.6,.7)"/><path d="M12.500 2l3.400 4h-1.900v2.800h-3v-2.800h-1.900z" fill="#e04848" stroke="#701010" stroke-width=".7"/></g><g transform="rotate(180 12.500 11.700)"><path d="M12.500 2l3.400 4h-1.900v2.800h-3v-2.800h-1.900z" fill="#0a0a0a" transform="translate(.6,.7)"/><path d="M12.500 2l3.400 4h-1.900v2.800h-3v-2.800h-1.900z" fill="#e04848" stroke="#701010" stroke-width=".7"/></g><g transform="rotate(270 12.500 11.700)"><path d="M12.500 2l3.400 4h-1.900v2.800h-3v-2.800h-1.900z" fill="#0a0a0a" transform="translate(.6,.7)"/><path d="M12.500 2l3.400 4h-1.900v2.800h-3v-2.800h-1.900z" fill="#e04848" stroke="#701010" stroke-width=".7"/></g></svg>
<svg class="ic" style="left:766px;top:134px" width="24" height="24" viewBox="0 0 24 24"><rect x="5.500" y="4.700" width="14" height="14" fill="none" stroke="#555" stroke-width=".9"/><g transform="rotate(0 12.500 11.700)"><path d="M12.500 9.800l3.400-4h-1.900v-3h-3v3h-1.900z" fill="#e04848" stroke="#701010" stroke-width=".7"/></g><g transform="rotate(90 12.500 11.700)"><path d="M12.500 9.800l3.400-4h-1.900v-3h-3v3h-1.900z" fill="#e04848" stroke="#701010" stroke-width=".7"/></g><g transform="rotate(180 12.500 11.700)"><path d="M12.500 9.800l3.400-4h-1.900v-3h-3v3h-1.900z" fill="#e04848" stroke="#701010" stroke-width=".7"/></g><g transform="rotate(270 12.500 11.700)"><path d="M12.500 9.800l3.400-4h-1.900v-3h-3v3h-1.900z" fill="#e04848" stroke="#701010" stroke-width=".7"/></g></svg>
<svg class="ic" style="left:797px;top:134px" width="24" height="24" viewBox="0 0 24 24"><path d="M7 18c-1.500-5 1-10 4.500-9.500c2.500.5 2.500 3.500 1.500 5.500" fill="none" stroke="#111" stroke-width="3.800"/><path d="M7 18c-1.500-5 1-10 4.500-9.500c2.500.5 2.500 3.500 1.500 5.500" fill="none" stroke="#f0d800" stroke-width="2.200"/><path d="M9 7.500l-5 2 4.500 3z" fill="#f0d800" stroke="#111" stroke-width=".7" transform="rotate(-50 9 9)"/><path d="M14 7l2.500-2h5v4.500l-2.500 2h-5z" fill="#4a80c4" stroke="#16202e" stroke-width=".8"/><path d="M14 7h5v4.500M19 7l2.500-2" stroke="#16202e" stroke-width=".8" fill="none"/><circle cx="6.500" cy="19" r="2" fill="#e02020" stroke="#600" stroke-width=".5"/></svg>
<svg class="ic" style="left:828px;top:134px" width="24" height="24" viewBox="0 0 24 24"><path d="M4 20L22 5M7 6l12 13" stroke="#222" stroke-width=".7"/><circle cx="12.700" cy="12.500" r="5.600" fill="#8888d8" stroke="#1a1a4a" stroke-width="1"/><path d="M4.500 8c3-4.500 10-4.500 13 0c1.500 2.500 1.500 5 0 7" fill="none" stroke="#111" stroke-width="3.400"/><path d="M4.500 8c3-4.500 10-4.500 13 0c1.500 2.500 1.500 5 0 7" fill="none" stroke="#f0d800" stroke-width="1.900"/><path d="M2.500 5.500l5 .5-3 4z" fill="#f0d800" stroke="#111" stroke-width=".7"/></svg>
<svg class="ic" style="left:859px;top:134px" width="24" height="24" viewBox="0 0 24 24"><path d="M4 6.500l4-3.500h13v12l-4 3.500h-13z" fill="#0a0a0a" transform="translate(.9,1)"/><path d="M4 6.500h13v12h-13z" fill="#f8f800" stroke="#16161e" stroke-width="1.100"/><path d="M4 6.500l4-3.500h13l-4 3.500z" fill="#8484c4" stroke="#16161e" stroke-width="1.100"/><path d="M17 6.500l4-3.500v12l-4 3.500z" fill="#6868ac" stroke="#16161e" stroke-width="1.100"/></svg>
<svg class="ic" style="left:890px;top:134px" width="24" height="24" viewBox="0 0 24 24"><path d="M4 6.500l4-3.500h13v12l-4 3.500h-13z" fill="#0a0a0a" transform="translate(.9,1)"/><path d="M4 6.500h13v12h-13z" fill="#8484c4" stroke="#16161e" stroke-width="1.100"/><path d="M4 6.500l4-3.500h13l-4 3.500z" fill="#8484c4" stroke="#16161e" stroke-width="1.100"/><path d="M17 6.500l4-3.500v12l-4 3.500z" fill="#6868ac" stroke="#16161e" stroke-width="1.100"/><path d="M8 4h12.500v11h-3.500v-8.500h-9z" fill="#f8f800"/><path d="M8 4v11h9" fill="none" stroke="#b0b0b0" stroke-width=".7"/><path d="M4 6.500h13v12h-13zM17 6.500l4-3.500" fill="none" stroke="#16161e" stroke-width="1.100"/></svg>
<svg class="ic" style="left:921px;top:134px" width="24" height="24" viewBox="0 0 24 24"><path d="M4 6.500l4-3.500h13v12l-4 3.500h-13z" fill="#0a0a0a" transform="translate(.9,1)"/><path d="M4 6.500h13v12h-13z" fill="#8484c4" stroke="#16161e" stroke-width="1.100"/><path d="M4 6.500l4-3.500h13l-4 3.500z" fill="#f8f800" stroke="#16161e" stroke-width="1.100"/><path d="M17 6.500l4-3.500v12l-4 3.500z" fill="#6868ac" stroke="#16161e" stroke-width="1.100"/><path d="M8 3v12h13M8 15l-4 3.500" stroke="#b0b0b0" stroke-width=".7" fill="none"/></svg>
<svg class="ic" style="left:952px;top:134px" width="24" height="24" viewBox="0 0 24 24"><path d="M4 6.500l4-3.500h13v12l-4 3.500h-13z" fill="#0a0a0a" transform="translate(.9,1)"/><path d="M4 6.500h13v12h-13z" fill="#8484c4" stroke="#16161e" stroke-width="1.100"/><path d="M4 6.500l4-3.500h13l-4 3.500z" fill="#8484c4" stroke="#16161e" stroke-width="1.100"/><path d="M17 6.500l4-3.500v12l-4 3.500z" fill="#6868ac" stroke="#16161e" stroke-width="1.100"/><path d="M4.600 18l3.400-3h9v3z" fill="#f8f800"/><path d="M8 3v12h13M8 15l-4 3.500" stroke="#b0b0b0" stroke-width=".7" fill="none"/></svg>
<svg class="ic" style="left:983px;top:134px" width="24" height="24" viewBox="0 0 24 24"><path d="M4 6.500l4-3.500h13v12l-4 3.500h-13z" fill="#0a0a0a" transform="translate(.9,1)"/><path d="M4 6.500h13v12h-13z" fill="#8484c4" stroke="#16161e" stroke-width="1.100"/><path d="M4 6.500l4-3.500h13l-4 3.500z" fill="#8484c4" stroke="#16161e" stroke-width="1.100"/><path d="M17 6.500l4-3.500v12l-4 3.500z" fill="#6868ac" stroke="#16161e" stroke-width="1.100"/><path d="M4.500 7l3.500-3v11l-3.500 3z" fill="#f8f800"/><path d="M8 3v12h13M8 15l-4 3.500" stroke="#b0b0b0" stroke-width=".7" fill="none"/></svg>
<svg class="ic" style="left:1014px;top:134px" width="24" height="24" viewBox="0 0 24 24"><path d="M4 6.500l4-3.500h13v12l-4 3.500h-13z" fill="#0a0a0a" transform="translate(.9,1)"/><path d="M4 6.500h13v12h-13z" fill="#8484c4" stroke="#16161e" stroke-width="1.100"/><path d="M4 6.500l4-3.500h13l-4 3.500z" fill="#8484c4" stroke="#16161e" stroke-width="1.100"/><path d="M17 6.500l4-3.500v12l-4 3.500z" fill="#f8f800" stroke="#16161e" stroke-width="1.100"/><path d="M8 3v12h13M8 15l-4 3.500" stroke="#b0b0b0" stroke-width=".7" fill="none"/></svg>
<svg class="ic" style="left:1046px;top:134px" width="24" height="24" viewBox="0 0 24 24"><path d="M12.060 7.300A5.700 5.700 0 1 1 7.120 15.850" fill="none" stroke="url(#gArrow)" stroke-width="2.600" stroke-linecap="round"/><path d="M5.700 7.400L11.800 3.200V11.800z" fill="#0a5cdc"/></svg>
<svg class="ic" style="left:1077px;top:134px" width="24" height="24" viewBox="0 0 24 24"><path d="M12.700 7.300A5.700 5.700 0 1 0 17.640 15.850" fill="none" stroke="url(#gArrow)" stroke-width="2.600" stroke-linecap="round"/><path d="M19.300 7.400L13.200 3.200V11.800z" fill="#0a5cdc"/></svg>
<svg class="ic" style="left:1109px;top:134px" width="24" height="24" viewBox="0 0 24 24"><path d="M4 8.500l3.500-3.500h13v10.500l-3.500 3.800h-13z" fill="#0a0a0a" transform="translate(1,1.100)"/><path d="M4 8.500l3.500-3.500h13v10.500l-3.500 3.800h-13z" fill="#4a7ec4" stroke="#16202e" stroke-width=".9"/><path d="M4 8.500h13v10.800h-13z" fill="#6a9ad8" stroke="#16202e" stroke-width=".9"/><path d="M4 8.500l3.500-3.500h13l-3.500 3.500z" fill="#9cc0ea" stroke="#16202e" stroke-width=".8"/></svg>
<svg class="ic" style="left:1140px;top:134px" width="24" height="24" viewBox="0 0 24 24"><path d="M3 8l3-1.500 12.500-4v17l-12.500-4-3-1.500z" fill="#0a0a0a" opacity=".8" transform="translate(1,1.100)"/><path d="M3 8l3-1.500 12.500-4v17l-12.500-4-3-1.500z" fill="#5a8ad0" stroke="#2a4a80" stroke-width=".8"/><path d="M6 6.500v9" stroke="#2a4a80" stroke-width=".8"/><path d="M3 8l3-1.500 12.500-4-3 3z" fill="#8ab4e8"/></svg>
<svg class="ic" style="left:1170px;top:134px" width="24" height="24" viewBox="0 0 24 24"><text x="12.800" y="9" font-family="Liberation Sans, sans-serif" font-size="9" font-weight="bold" fill="#333" text-anchor="middle">3D</text><path d="M3.500 12c2-1.500 5-1.500 7.500-.5l1.800.8 1.800-.8c2.500-1 5.500-1 7.500.5l-.6 6.500c-.2 1.300-1.300 2-2.500 2h-3.500c-1.200 0-2-.8-2.200-2l-.5-2-.5 2c-.2 1.200-1 2-2.200 2h-3.500c-1.200 0-2.300-.7-2.500-2z" fill="#d8d8d8" stroke="#666" stroke-width=".7"/><path d="M4.800 13.200h6.200l-.5 4.500c-.1 1-.7 1.500-1.600 1.500h-2.400c-.9 0-1.400-.5-1.500-1.500z" fill="#18c0d0"/><path d="M14.600 13.200h6.200l-.2 4.500c-.1 1-.6 1.500-1.500 1.500h-2.400c-.9 0-1.500-.5-1.600-1.500z" fill="#e82030"/></svg>
<svg class="ic" style="left:1201px;top:134px" width="24" height="24" viewBox="0 0 24 24"><path d="M14 3.500v11.500l6 2M14 15l-3.500 3" stroke="#111" stroke-width="1.300" fill="none"/><path d="M14 2l-1.500 2.500h3zM21.500 17.500l-3-.2 1-2.300z" fill="#111"/><path d="M5.500 14c-2.500-4 0-9 4.500-9.500v-2.500l4 4-4 3.500v-2.500c-2.500.5-3.500 3.500-2 5.500z" fill="#f0e040" stroke="#5a5000" stroke-width=".7"/><path d="M9 17c2 2.500 6 3 9 1l1.500 1.500.5-5-5 .5 1.500 1.500c-2 1-4 .5-5-1z" fill="#f04848" stroke="#701010" stroke-width=".7"/></svg>
<svg class="ic" style="left:1232px;top:134px" width="24" height="24" viewBox="0 0 24 24"><path d="M4 5l3-2h9l3 3v8l-3 2h-9l-3-3z" fill="#0a0a0a" transform="translate(.8,.9)"/><path d="M4 5l3-2h9l3 3v8l-3 2h-9l-3-3z" fill="#8c8c8c" stroke="#333" stroke-width=".9"/><path d="M7 3v6l-3 2M7 9h8.500l3.500 2M15.500 9v7" stroke="#444" stroke-width=".8" fill="none"/><circle cx="10" cy="8" r="3.500" fill="#b4b4b4" stroke="#444" stroke-width=".8"/><path d="M13 15l1.500 5.500h-5l-1.500 1.500h11l-2-1.500h-1l-1-5.500" fill="#9a9a9a" stroke="#222" stroke-width=".9"/></svg>
<svg class="ic" style="left:1263px;top:134px" width="24" height="24" viewBox="0 0 24 24"><rect x="5" y="3" width="7" height="7" fill="none" stroke="#e8d800" stroke-width="1.400" stroke-dasharray="2 1"/><path d="M8.500 1.500v10M3.500 6.500h10" stroke="#111" stroke-width="1"/><rect x="10" y="12" width="14" height="10" fill="#f0d800" stroke="#222" stroke-width=".9"/><path d="M12 14.500h12M12 17h12M12 19.500h12" stroke="#222" stroke-width="1.100"/></svg>
<svg class="view3d" width="991" height="917" viewBox="289 163 991 917" shape-rendering="crispEdges">
<defs><linearGradient id="bg" x1="0" y1="0" x2="0" y2="1"><stop offset="0" stop-color="#e8edfe"/><stop offset="1" stop-color="#abc4fd"/></linearGradient></defs>
<rect x="289" y="163" width="991" height="917" fill="url(#bg)"/>
<polygon points="500.00,230.75 574.25,188.25 574.25,757.00 500.00,799.50" fill="#999999" stroke="#fff" stroke-width="1" stroke-linejoin="round"/>
<polygon points="427.50,272.50 500.00,230.75 500.00,424.25 427.50,466.25" fill="#999999" stroke="#fff" stroke-width="1" stroke-linejoin="round"/>
<polygon points="427.50,466.25 500.00,424.25 500.00,584.25 427.50,626.25" fill="#a8a8a8" stroke="#fff" stroke-width="1" stroke-linejoin="round"/>
<polygon points="427.50,626.25 500.00,584.25 500.00,799.50 427.50,841.25" fill="#999999" stroke="#fff" stroke-width="1" stroke-linejoin="round"/>
<polygon points="500.00,230.75 639.30,311.00 639.30,879.75 500.00,799.50" fill="#a8a8a8" stroke="#fff" stroke-width="1" stroke-linejoin="round"/>
<polygon points="427.50,466.25 500.00,424.25 639.30,504.50 565.60,546.50" fill="#999999" stroke="#fff" stroke-width="1" stroke-linejoin="round"/>
<polygon points="427.50,626.25 500.00,584.25 639.30,664.50 565.60,706.00" fill="#a8a8a8" stroke="#fff" stroke-width="1" stroke-linejoin="round"/>
<polygon points="565.60,353.00 713.20,267.91 713.20,620.91 565.60,706.00" fill="#999999"/>
<polygon points="565.60,706.00 713.20,620.91 713.20,836.66 565.60,921.75" fill="#a8a8a8"/>
<polygon points="565.60,353.00 713.20,267.91 713.20,836.66 565.60,921.75" fill="none" stroke="#fff" stroke-width="1" stroke-linejoin="round"/>
<line x1="583.75" y1="342.54" x2="583.75" y2="911.29" stroke="#fff" stroke-width="1"/>
<line x1="620.40" y1="321.41" x2="620.40" y2="890.16" stroke="#fff" stroke-width="1"/>
<line x1="639.50" y1="310.40" x2="639.50" y2="879.15" stroke="#fff" stroke-width="1"/>
<line x1="657.30" y1="300.13" x2="657.30" y2="868.88" stroke="#fff" stroke-width="1"/>
<line x1="694.40" y1="278.75" x2="694.40" y2="847.50" stroke="#fff" stroke-width="1"/>
<line x1="565.60" y1="500.50" x2="713.20" y2="415.41" stroke="#fff" stroke-width="1"/>
<line x1="565.60" y1="546.00" x2="713.20" y2="460.91" stroke="#fff" stroke-width="1"/>
<line x1="565.60" y1="556.00" x2="713.20" y2="470.91" stroke="#fff" stroke-width="1"/>
<line x1="565.60" y1="594.00" x2="713.20" y2="508.91" stroke="#fff" stroke-width="1"/>
<line x1="565.60" y1="657.00" x2="713.20" y2="571.91" stroke="#fff" stroke-width="1"/>
<line x1="565.60" y1="696.50" x2="713.20" y2="611.41" stroke="#fff" stroke-width="1"/>
<line x1="565.60" y1="706.00" x2="713.20" y2="620.91" stroke="#fff" stroke-width="1"/>
<line x1="565.60" y1="722.80" x2="713.20" y2="637.71" stroke="#fff" stroke-width="1"/>
<line x1="583.75" y1="490.04" x2="602.10" y2="496.30" stroke="#fff" stroke-width="1"/>
<line x1="620.40" y1="468.91" x2="602.10" y2="496.30" stroke="#fff" stroke-width="1"/>
<line x1="620.40" y1="514.41" x2="602.10" y2="496.30" stroke="#fff" stroke-width="1"/>
<line x1="583.75" y1="535.54" x2="602.10" y2="496.30" stroke="#fff" stroke-width="1"/>
<ellipse cx="602.10" cy="496.30" rx="12.86" ry="7.42" transform="rotate(-60 602.10 496.30)" fill="#999999" stroke="#fff" stroke-width="1"/>
<line x1="657.30" y1="447.63" x2="676.20" y2="453.00" stroke="#fff" stroke-width="1"/>
<line x1="694.40" y1="426.25" x2="676.20" y2="453.00" stroke="#fff" stroke-width="1"/>
<line x1="694.40" y1="471.75" x2="676.20" y2="453.00" stroke="#fff" stroke-width="1"/>
<line x1="657.30" y1="493.13" x2="676.20" y2="453.00" stroke="#fff" stroke-width="1"/>
<ellipse cx="676.20" cy="453.00" rx="12.86" ry="7.42" transform="rotate(-60 676.20 453.00)" fill="#999999" stroke="#fff" stroke-width="1"/>
<polygon points="575.60,506.25 722.80,421.39 722.80,643.89 575.60,728.75" fill="#a8a8a8" stroke="#fff" stroke-width="1" stroke-linejoin="round"/>
<line x1="593.75" y1="495.79" x2="593.75" y2="718.29" stroke="#fff" stroke-width="1"/>
<line x1="630.30" y1="474.72" x2="630.30" y2="697.22" stroke="#fff" stroke-width="1"/>
<line x1="648.75" y1="464.08" x2="648.75" y2="686.58" stroke="#fff" stroke-width="1"/>
<line x1="667.50" y1="453.27" x2="667.50" y2="675.77" stroke="#fff" stroke-width="1"/>
<line x1="704.40" y1="432.00" x2="704.40" y2="654.50" stroke="#fff" stroke-width="1"/>
<line x1="575.60" y1="551.25" x2="722.80" y2="466.39" stroke="#fff" stroke-width="1"/>
<line x1="575.60" y1="561.00" x2="722.80" y2="476.14" stroke="#fff" stroke-width="1"/>
<line x1="575.60" y1="600.00" x2="722.80" y2="515.14" stroke="#fff" stroke-width="1"/>
<line x1="575.60" y1="662.50" x2="722.80" y2="577.64" stroke="#fff" stroke-width="1"/>
<line x1="575.60" y1="702.00" x2="722.80" y2="617.14" stroke="#fff" stroke-width="1"/>
<line x1="575.60" y1="712.00" x2="722.80" y2="627.14" stroke="#fff" stroke-width="1"/>
<line x1="593.75" y1="495.79" x2="612.20" y2="502.00" stroke="#fff" stroke-width="1"/>
<line x1="630.30" y1="474.72" x2="612.20" y2="502.00" stroke="#fff" stroke-width="1"/>
<line x1="630.30" y1="519.72" x2="612.20" y2="502.00" stroke="#fff" stroke-width="1"/>
<line x1="593.75" y1="540.79" x2="612.20" y2="502.00" stroke="#fff" stroke-width="1"/>
<ellipse cx="612.20" cy="502.00" rx="12.49" ry="7.21" transform="rotate(-60 612.20 502.00)" fill="none" stroke="#fff" stroke-width="1"/>
<ellipse cx="612.20" cy="502.00" rx="7.35" ry="4.24" transform="rotate(-60 612.20 502.00)" fill="#999999" stroke="#fff" stroke-width="1"/>
<line x1="609.00" y1="500.40" x2="615.60" y2="504.00" stroke="#fff" stroke-width="1"/>
<line x1="667.50" y1="453.27" x2="686.30" y2="459.00" stroke="#fff" stroke-width="1"/>
<line x1="704.40" y1="432.00" x2="686.30" y2="459.00" stroke="#fff" stroke-width="1"/>
<line x1="704.40" y1="477.00" x2="686.30" y2="459.00" stroke="#fff" stroke-width="1"/>
<line x1="667.50" y1="498.27" x2="686.30" y2="459.00" stroke="#fff" stroke-width="1"/>
<ellipse cx="686.30" cy="459.00" rx="12.49" ry="7.21" transform="rotate(-60 686.30 459.00)" fill="none" stroke="#fff" stroke-width="1"/>
<ellipse cx="686.30" cy="459.00" rx="7.35" ry="4.24" transform="rotate(-60 686.30 459.00)" fill="#999999" stroke="#fff" stroke-width="1"/>
<line x1="683.10" y1="457.40" x2="689.70" y2="461.00" stroke="#fff" stroke-width="1"/>
<line x1="593.75" y1="652.04" x2="612.10" y2="661.50" stroke="#fff" stroke-width="1"/>
<line x1="630.30" y1="630.97" x2="612.10" y2="661.50" stroke="#fff" stroke-width="1"/>
<line x1="630.30" y1="670.47" x2="612.10" y2="661.50" stroke="#fff" stroke-width="1"/>
<line x1="593.75" y1="691.54" x2="612.10" y2="661.50" stroke="#fff" stroke-width="1"/>
<ellipse cx="612.10" cy="661.50" rx="12.49" ry="7.21" transform="rotate(-60 612.10 661.50)" fill="none" stroke="#fff" stroke-width="1"/>
<ellipse cx="612.10" cy="661.50" rx="7.35" ry="4.24" transform="rotate(-60 612.10 661.50)" fill="#999999" stroke="#fff" stroke-width="1"/>
<line x1="608.90" y1="659.90" x2="615.50" y2="663.50" stroke="#fff" stroke-width="1"/>
<line x1="593.75" y1="550.54" x2="612.10" y2="560.00" stroke="#fff" stroke-width="1"/>
<line x1="630.30" y1="529.47" x2="612.10" y2="560.00" stroke="#fff" stroke-width="1"/>
<line x1="630.30" y1="568.47" x2="612.10" y2="560.00" stroke="#fff" stroke-width="1"/>
<line x1="593.75" y1="589.54" x2="612.10" y2="560.00" stroke="#fff" stroke-width="1"/>
<polygon points="575.60,712.00 722.80,627.14 1215.20,912.04 1068.00,996.90" fill="#999999" stroke="#fff" stroke-width="1" stroke-linejoin="round"/>
<polygon points="575.60,712.00 648.75,669.83 1141.15,954.73 1068.00,996.90" fill="#a8a8a8" stroke="#fff" stroke-width="1" stroke-linejoin="round"/>
<polygon points="648.75,509.08 1141.15,793.98 1141.15,954.73 648.75,669.83" fill="#a8a8a8" stroke="#fff" stroke-width="1" stroke-linejoin="round"/>
<polygon points="648.75,509.08 722.80,466.39 1215.20,751.29 1141.15,793.98" fill="#a8a8a8" stroke="#fff" stroke-width="1" stroke-linejoin="round"/>
<polygon points="575.60,551.25 648.75,509.08 1141.15,793.98 1068.00,836.15" fill="#999999" stroke="#fff" stroke-width="1" stroke-linejoin="round"/>
<polygon points="559.07,318.76 539.65,327.79 536.57,321.17 517.00,340.75 544.58,338.40 541.50,331.78 560.93,322.74" fill="#ff0000"/>
<polygon points="488.02,388.20 465.54,372.40 469.73,366.43 443.00,359.25 458.81,381.97 463.01,376.00 485.48,391.80" fill="#0000ff"/>
<polygon points="499.55,423.11 501.03,453.39 493.74,453.74 504.50,479.25 512.72,452.82 505.43,453.17 503.95,422.89" fill="#0000ff"/>
<polygon points="808.65,468.88 700.30,402.25 704.12,396.03 677.00,390.50 694.17,412.21 698.00,405.99 806.35,472.62" fill="#ff0000"/>
<polygon points="635.04,493.59 666.56,514.31 662.56,520.41 689.50,526.75 672.99,504.53 668.98,510.63 637.46,489.91" fill="#ff0000"/>
<polygon points="523.95,653.68 523.31,634.66 530.61,634.42 520.25,608.75 511.62,635.05 518.92,634.81 519.55,653.82" fill="#ff0000"/>
<polygon points="852.81,647.18 854.42,666.77 847.15,667.37 858.75,692.50 866.08,665.81 858.81,666.41 857.19,646.82" fill="#ff0000"/>
<polygon points="1103.95,720.73 1103.63,675.48 1110.93,675.43 1101.25,649.50 1091.93,675.57 1099.23,675.51 1099.55,720.77" fill="#0000ff"/>
<polygon points="488.91,797.06 467.61,779.24 472.29,773.64 446.25,764.25 460.10,788.22 464.78,782.62 486.09,800.44" fill="#0000ff"/>
<polygon points="851.70,852.47 851.50,835.22 858.80,835.14 849.00,809.25 839.80,835.36 847.10,835.27 847.30,852.53" fill="#ff0000"/>
<polygon points="1035.05,836.91 1001.10,858.98 997.12,852.86 980.50,875.00 1007.48,868.79 1003.50,862.67 1037.45,840.59" fill="#ff0000"/>
<polygon points="1159.80,839.25 1159.80,881.50 1152.50,881.50 1162.00,907.50 1171.50,881.50 1164.20,881.50 1164.20,839.25" fill="#0000ff"/>
<polygon points="589.21,879.28 621.43,902.73 617.14,908.63 643.75,916.25 628.32,893.27 624.02,899.17 591.79,875.72" fill="#0000ff"/>

<polygon points="388.3,925.5 438.8,954.5 389,983 338.8,954.5" fill="#f5f5f5"/>
<polygon points="332,967.5 381.7,995.5 381.7,1052.5 332,1024" fill="#f5f5f5"/>
<polygon points="396.3,995.5 445.8,967.5 445.8,1024 396.3,1052.5" fill="#f5f5f5"/>
<polygon points="332,957.5 338.8,954.5 389,983 381.7,995.5 332,967.5" fill="#707070"/>
<polygon points="445.8,957.5 438.8,954.5 389,983 396.3,995.5 445.8,967.5" fill="#707070"/>
<polygon points="381.7,995.5 396.3,995.5 396.3,1052.5 388.8,1056 381.700,1052.500" fill="#707070"/>
<polygon points="389,983 381.7,995.5 396.3,995.5" fill="#8c8c8c"/>
<polygon points="332,957.5 338.8,954.5 332,967.500" fill="#484848"/>
<polygon points="445.8,957.5 438.8,954.5 445.8,967.500" fill="#484848"/>
<polygon points="381.7,1052.5 396.3,1052.5 388.8,1056" fill="#484848"/>
<text x="0" y="0" font-family="Liberation Sans, sans-serif" font-size="8" fill="#8a8a8a" text-anchor="middle" transform="matrix(.866,.5,-.866,.5,389,956)">TOP</text>
<text x="0" y="0" font-family="Liberation Sans, sans-serif" font-size="9" fill="#8a8a8a" text-anchor="middle" transform="matrix(.866,.5,0,1,355,1013)">FRONT</text>
<text x="0" y="0" font-family="Liberation Sans, sans-serif" font-size="9" fill="#8a8a8a" text-anchor="middle" transform="matrix(.866,-.5,0,1,422,1013)">RIGHT</text>
<path d="M314.2 1066V1052" stroke="#0000d0" stroke-width="2"/><path d="M314.2 1050l-1.800 3.500h3.600z" fill="#0000d0"/>
<path d="M314.2 1066l11-6.300" stroke="#00b000" stroke-width="2"/><path d="M328.500 1057.800l-5 .7 2.500 3.600z" fill="#00b000"/>
<path d="M314.2 1066l11 6" stroke="#c00000" stroke-width="2"/><path d="M328.500 1074l-5-.7 2.500-3.600z" fill="#c00000"/>
<text x="314.800" y="1048" font-family="Liberation Sans, sans-serif" font-size="10.500" fill="#5050ff">Z</text>
<text x="331" y="1056.500" font-family="Liberation Sans, sans-serif" font-size="10.500" fill="#50e090">Y</text>
<text x="330.300" y="1076" font-family="Liberation Sans, sans-serif" font-size="10.500" fill="#ff5070">X</text>

</svg>
</body></html>
